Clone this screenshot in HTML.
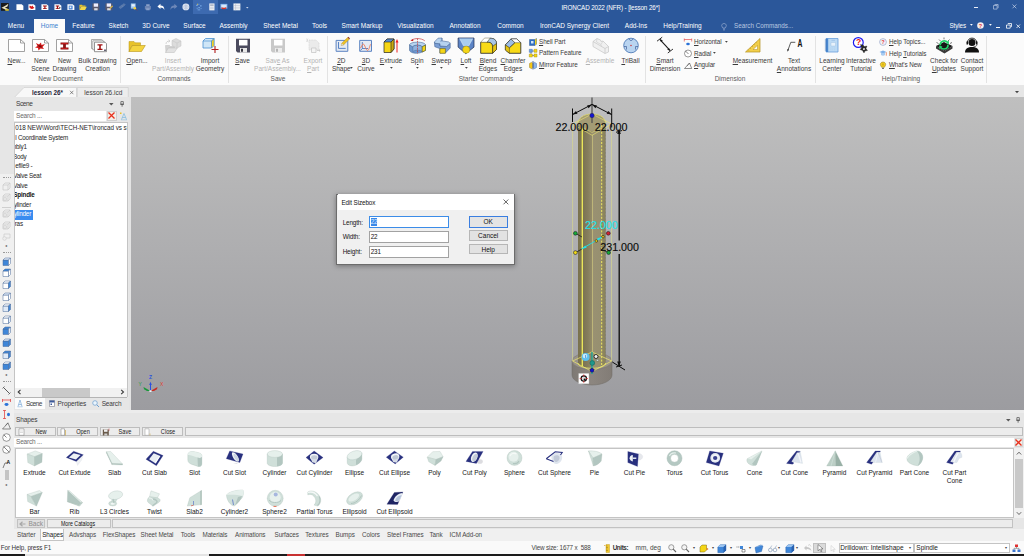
<!DOCTYPE html><html><head><meta charset="utf-8"><title>IRONCAD 2022 (NFR) - [lesson 26*]</title><style>
html,body{margin:0;padding:0}
body{width:1024px;height:556px;overflow:hidden;position:relative;background:#e4e4e4;font-family:"Liberation Sans",sans-serif;font-size:6.5px;color:#3a3a3a}
.a{position:absolute}
.t{position:absolute;white-space:nowrap;line-height:8px;height:8px}
.c{transform:translateX(-50%);text-align:center}
.w{color:#fff}
.d{color:#b4b4b4}
.g{color:#5a5a5a}
u{text-decoration:underline;text-decoration-thickness:0.5px;text-underline-offset:0.6px}
svg{position:absolute;overflow:visible}
</style></head><body>
<div class="a" style="left:0px;top:0px;width:1024px;height:33px;background:#2b579a;"></div>
<div class="t c w" style="left:610.5px;top:3.5px;font-size:6.3px;letter-spacing:-0.12px">IRONCAD 2022 (NFR) - [lesson 26*]</div>
<div class="a" style="left:193px;top:0px;width:25px;height:14px;background:#3d6ab0;"></div>
<svg style="left:1.1px;top:3.2px" width="7.8" height="7.8" viewBox="0 0 9 9"><path d="M0 0h9v9h-9z" fill="#1a1a1a"/><path d="M0.500 5.500l4-2 4-2.500-1 3-3 1.500 3.500 1-2 1.500-3-1.500z" fill="#e8e0c0"/><path d="M5 7h4v2h-4z" fill="#d8c840"/></svg>
<svg style="left:15.6px;top:3.2px" width="7.8" height="7.8" viewBox="0 0 9 9"><path d="M0.500 1.500h6l2 1.800v4.700h-8z" fill="#fff"/></svg>
<svg style="left:28.1px;top:3.2px" width="7.8" height="7.8" viewBox="0 0 9 9"><path d="M0.500 1.500h6l2 1.800v4.700h-8z" fill="#fff"/><path d="M2 3l2 1 1.500-1 0.500 1.500 1.500 0-1.500 1.500 0.500 1-2-0.500-1.500 0.800 0-1.500-1.500-0.500z" fill="#d81818"/></svg>
<svg style="left:41.1px;top:3.2px" width="7.8" height="7.8" viewBox="0 0 9 9"><path d="M0.500 1.500h6l2 1.800v4.700h-8z" fill="#fff"/><path d="M2.300 3h4.400v1h-1.500v2h1.500v1h-4.400v-1h1.500v-2h-1.500z" fill="#a01010"/></svg>
<svg style="left:54.1px;top:3.2px" width="7.8" height="7.8" viewBox="0 0 9 9"><path d="M0.500 1.500h6l2 1.800v4.700h-8z" fill="#fff"/><path d="M2 3h4v1h-1.300v2h1.300v1h-4v-1h1.300v-2h-1.300z" fill="#a01010"/><path d="M6 4.500l2 1-2 1.500z" fill="#333"/></svg>
<svg style="left:66.6px;top:3.2px" width="7.8" height="7.8" viewBox="0 0 9 9"><path d="M0.500 1.500h6l2 1.800v4.700h-8z" fill="#fff"/><path d="M2 3h4.500v4.500h-4.500z" fill="#4a86d8"/><path d="M3 4h2v2h-2z" fill="#e8f0fa"/></svg>
<svg style="left:79.1px;top:3.2px" width="7.8" height="7.8" viewBox="0 0 9 9"><path d="M0.500 2h3l0.600 0.800h3.400v1.500h-5.500l-1.500 3.700z" fill="#e8c22a"/><path d="M2.500 4.300h6.500l-2 3.700h-6.500z" fill="#f4d84a"/></svg>
<svg style="left:92.1px;top:3.2px" width="7.8" height="7.8" viewBox="0 0 9 9"><path d="M0.500 0.500h8v8h-7l-1-1z" fill="#5a5a6e"/><path d="M2 0.500h5v3.800h-5z" fill="#eef"/><path d="M2.500 6h4v2.500h-4z" fill="#dcdce4"/></svg>
<svg style="left:105.1px;top:3.2px" width="7.8" height="7.8" viewBox="0 0 9 9"><path d="M0.500 0.500h8v8h-7l-1-1z" fill="#5a5a6e"/><path d="M2 0.500h5v3.800h-5z" fill="#eef"/><path d="M2.500 6h4v2.500h-4z" fill="#dcdce4"/><path d="M5 6l3.500-3 0.800 0.800-3.500 3z" fill="#e8c040"/></svg>
<svg style="left:118.1px;top:3.2px" width="7.8" height="7.8" viewBox="0 0 9 9"><path d="M1 5l3-2.500 2 1.500-3 2.500zM4 3l3-2.500 1.500 1.500-3 2.500z" fill="#5877a8" stroke="#6e8cbc" stroke-width="0.400"/></svg>
<svg style="left:130.1px;top:3.2px" width="7.8" height="7.8" viewBox="0 0 9 9"><path d="M1 0.500h5.500v6h-5.500z" fill="#9fc6ee"/><path d="M2 1.500h3.500v2.500h-3.500z" fill="#e8f2fc"/><circle cx="5.500" cy="6" r="1.500" fill="#f0d040"/><path d="M6.500 7l1.500 1.500" stroke="#c03020" stroke-width="0.700"/></svg>
<svg style="left:144.1px;top:3.2px" width="7.8" height="7.8" viewBox="0 0 9 9"><path d="M1 3.500h7v4h-7z" fill="#6e86b4"/><path d="M2.500 1.500h4v2h-4zM2.500 6h4v2.500h-4z" fill="#8aa0c8"/></svg>
<svg style="left:156.6px;top:3.2px" width="7.8" height="7.8" viewBox="0 0 9 9"><path d="M0.500 4l3.500-3v2c3 0 4.500 1.500 4.500 5-1-2-2.500-2.800-4.500-2.800v1.800z" fill="#fff"/></svg>
<svg style="left:169.6px;top:3.2px" width="7.8" height="7.8" viewBox="0 0 9 9"><path d="M8.500 4l-3.500-3v2c-3 0-4.500 1.500-4.500 5 1-2 2.500-2.800 4.500-2.800v1.800z" fill="#6e88b8"/></svg>
<svg style="left:182.1px;top:3.2px" width="7.8" height="7.8" viewBox="0 0 9 9"><circle cx="4.500" cy="4.500" r="4" fill="#dfe6f2"/><path d="M4.500 0.500v8M0.500 4.500h8" stroke="#9fb0cc" stroke-width="0.500"/><path d="M2 2c1.500 1.500 3.500 1.500 5 0M2 7c1.500-1.500 3.500-1.500 5 0" fill="none" stroke="#9fb0cc" stroke-width="0.500"/></svg>
<svg style="left:195.1px;top:3.2px" width="7.8" height="7.8" viewBox="0 0 9 9"><path d="M1.500 2h1.500v1.500h-1.500zM4 1h1v1h-1zM6 2.500h1.500v1.500h-1.500zM2 5.500h1v1h-1zM4 4.500h1.500v1.500h-1.500zM6.500 6h1v1h-1zM3 7.500h3v1h-3z" fill="#7fb2ee"/><path d="M2.500 1h1v1h-1z" fill="#f0d040"/></svg>
<svg style="left:207.6px;top:3.2px" width="7.8" height="7.8" viewBox="0 0 9 9"><path d="M1.500 0.500h6v8h-6z" fill="#eef0f4"/><path d="M2.500 1.500h4v2h-4z" fill="#b0b8c8"/><path d="M2.500 5h4M2.500 6.500h4" stroke="#b0b8c8" stroke-width="0.600"/></svg>
<svg style="left:220.1px;top:3.2px" width="7.8" height="7.8" viewBox="0 0 9 9"><path d="M0.500 1h8v5.500h-8z" fill="#7fb2ee"/><path d="M1.500 2h6v3.500h-6z" fill="#d8e8fa"/><path d="M2 4.500c1.500 1.500 3.500 1.500 5 0l0.500 1.500c-2 1.500-4 1.500-6 0z" fill="#e03020"/></svg>
<svg style="left:233.1px;top:3.2px" width="7.8" height="7.8" viewBox="0 0 9 9"><path d="M0.500 0.500h8v8h-8z" fill="#eef0f4"/><path d="M0.500 3h8M0.500 5.700h8M3 0.500v8" stroke="#a8b0c0" stroke-width="0.500"/></svg>
<svg style="left:246.0px;top:6.7px" width="2.6" height="1.6" viewBox="0 0 2.6 1.6"><path d="M0 0h2.6l-1.3 1.6z" fill="#c8d4ea"/></svg>
<div class="a" style="left:974px;top:7px;width:4px;height:1px;background:#e8eef8;"></div>
<svg style="left:993.3px;top:3.5px" width="6" height="6" viewBox="0 0 6 6"><path d="M1.500 0.500h3.600v3.600M0.500 1.500h3.600v3.600h-3.600z" fill="none" stroke="#d0daee" stroke-width="0.600"/></svg>
<svg style="left:1012.2px;top:4px" width="5" height="5" viewBox="0 0 5 5"><path d="M0.500 0.500l3.800 3.800M4.300 0.500l-3.800 3.800" stroke="#e0e8f6" stroke-width="0.600"/></svg>
<svg style="left:969.9px;top:24.15px" width="2.8" height="1.7" viewBox="0 0 2.8 1.7"><path d="M0 0h2.8l-1.4 1.7z" fill="#fff"/></svg>
<svg style="left:976.8px;top:21.8px" width="7" height="7" viewBox="0 0 7 7"><circle cx="3.500" cy="3.500" r="3.300" fill="#f6eeee"/></svg>
<div class="t" style="left:978.700px;top:21.500px;font-size:5.500px;font-weight:bold;color:#e03030;line-height:8px">?</div>
<svg style="left:988.6px;top:24.15px" width="2.8" height="1.7" viewBox="0 0 2.8 1.7"><path d="M0 0h2.8l-1.4 1.7z" fill="#fff"/></svg>
<div class="a" style="left:996px;top:26.5px;width:3.5px;height:1px;background:#fff;"></div>
<svg style="left:1005.5px;top:22.5px" width="6" height="6" viewBox="0 0 6 6"><path d="M1.800 0.500h3.700v3.200h-1M0.500 2h3.700v3.200h-3.700z" fill="none" stroke="#fff" stroke-width="0.800"/></svg>
<svg style="left:1016px;top:23.5px" width="5" height="5" viewBox="0 0 5 5"><path d="M0.500 0.500l3.500 3.500M4 0.500l-3.500 3.500" stroke="#fff" stroke-width="0.800"/></svg>
<svg style="left:720.5px;top:22.5px" width="6" height="8" viewBox="0 0 6 8"><path d="M3 0.500c-1.500 0-2.300 1-2.300 2.200 0 1 0.800 1.500 1 2.300h2.600c0.200-0.800 1-1.300 1-2.300 0-1.200-0.800-2.200-2.300-2.200zM2 6h2M2.200 7h1.600" fill="none" stroke="#b9c7e0" stroke-width="0.500"/></svg>
<div class="a" style="left:34px;top:19px;width:31px;height:14px;background:#fbfbfb;"></div>
<div class="t c w" style="left:16px;top:22.3px;">Menu</div>
<div class="t c w" style="left:83.5px;top:22.3px;">Feature</div>
<div class="t c w" style="left:118.5px;top:22.3px;">Sketch</div>
<div class="t c w" style="left:156px;top:22.3px;">3D Curve</div>
<div class="t c w" style="left:194.5px;top:22.3px;">Surface</div>
<div class="t c w" style="left:233.5px;top:22.3px;">Assembly</div>
<div class="t c w" style="left:280.5px;top:22.3px;">Sheet Metal</div>
<div class="t c w" style="left:319.5px;top:22.3px;">Tools</div>
<div class="t c w" style="left:362px;top:22.3px;">Smart Markup</div>
<div class="t c w" style="left:415.5px;top:22.3px;">Visualization</div>
<div class="t c w" style="left:465px;top:22.3px;">Annotation</div>
<div class="t c w" style="left:510.5px;top:22.3px;">Common</div>
<div class="t c w" style="left:574.5px;top:22.3px;">IronCAD Synergy Client</div>
<div class="t c w" style="left:636px;top:22.3px;">Add-Ins</div>
<div class="t c w" style="left:682.5px;top:22.3px;">Help/Training</div>
<div class="t c " style="left:49.5px;top:22.3px;color:#3c7fd0">Home</div>
<div class="t " style="left:734px;top:22.3px;color:#b9c7e0;font-size:6.3px">Search Commands...</div>
<div class="t w" style="left:949.5px;top:22.3px;font-size:6.3px;letter-spacing:-0.1px">Styles</div>
<div class="a" style="left:0px;top:33px;width:1024px;height:52px;background:#fbfbfb;"></div>
<div class="a" style="left:120.3px;top:35.5px;width:1px;height:47.5px;background:#e3e3e3;"></div>
<div class="a" style="left:227.8px;top:35.5px;width:1px;height:47.5px;background:#e3e3e3;"></div>
<div class="a" style="left:326.8px;top:35.5px;width:1px;height:47.5px;background:#e3e3e3;"></div>
<div class="a" style="left:645px;top:35.5px;width:1px;height:47.5px;background:#e3e3e3;"></div>
<div class="a" style="left:815px;top:35.5px;width:1px;height:47.5px;background:#e3e3e3;"></div>
<div class="a" style="left:986px;top:35.5px;width:1px;height:47.5px;background:#e3e3e3;"></div>
<svg style="left:7.5px;top:37px" width="18" height="16" viewBox="0 0 18 16"><path d="M0.5 2.5h12l4 3.5v8.5h-16z" fill="#fff" stroke="#8a8a8a" stroke-width="0.8"/><path d="M12.5 2.5v3.5h4" fill="none" stroke="#8a8a8a" stroke-width="0.8"/></svg>
<div class="t c " style="left:16.5px;top:56.7px;"><u>N</u>ew...</div>
<svg style="left:31.5px;top:37px" width="18" height="16" viewBox="0 0 18 16"><path d="M0.5 2.5h12l4 3.5v8.5h-16z" fill="#fff" stroke="#8a8a8a" stroke-width="0.8"/><path d="M12.5 2.5v3.5h4" fill="none" stroke="#8a8a8a" stroke-width="0.8"/><path d="M4 6l3 1.5 2-2 0.5 2.5 3.5-1-2.5 3 1.5 2-3.5-0.5-2 2-0.5-2.5-3-0.5 2.5-1.5z" fill="#d01818"/><path d="M6 8l3 0.5 1 2-3-0.5z" fill="#7a0c0c"/></svg>
<div class="t c " style="left:40.5px;top:56.7px;">New</div>
<div class="t c " style="left:40.5px;top:64.8px;">Scene</div>
<svg style="left:55.5px;top:37px" width="18" height="16" viewBox="0 0 18 16"><path d="M0.5 2.5h12l4 3.5v8.5h-16z" fill="#fff" stroke="#8a8a8a" stroke-width="0.8"/><path d="M12.5 2.5v3.5h4" fill="none" stroke="#8a8a8a" stroke-width="0.8"/><path d="M4.5 5.5h8v2h-2.6v3h2.6v2h-8v-2h2.6v-3h-2.6z" fill="#8c1414"/><path d="M5.5 6h6v0.8h-6zM5.500 11h6v0.8h-6z" fill="#d42020"/></svg>
<div class="t c " style="left:64.5px;top:56.7px;">New</div>
<div class="t c " style="left:64.5px;top:64.8px;">Drawing</div>
<svg style="left:88.5px;top:37px" width="18" height="16" viewBox="0 0 18 16"><path d="M2.500 2.500h10l2 1.500v7.500h-12z" fill="#fff" stroke="#8a8a8a" stroke-width="0.7"/><path d="M3.800 3.800h10l2 1.500v7.500h-12z" fill="#fff" stroke="#8a8a8a" stroke-width="0.7"/><path d="M5.500 5.200h10.500l1.500 1.500v8h-12z" fill="#fff" stroke="#777" stroke-width="0.8"/><path d="M8.500 7.200h5v1.300h-1.700v3.200h1.700v1.300h-5v-1.300h1.700v-3.200h-1.700z" fill="#a01010"/><path d="M15 12.500h2v1.500h-2z" fill="#667"/></svg>
<div class="t c " style="left:97.5px;top:56.7px;">Bulk Drawing</div>
<div class="t c " style="left:97.5px;top:64.8px;">Creation</div>
<div class="t c g" style="left:60.5px;top:74.5px;">New Document</div>
<svg style="left:128px;top:37px" width="18" height="16" viewBox="0 0 18 16"><path d="M1 4.500h5l1 1.300h5.500v2.700h-8.500l-3 6z" fill="#e8c22a" stroke="#b8961a" stroke-width="0.5"/><path d="M4.300 8.500h13l-3.800 6h-12.500z" fill="#f4d440" stroke="#b8961a" stroke-width="0.6"/></svg>
<div class="t c " style="left:137px;top:56.7px;"><u>O</u>pen...</div>
<svg style="left:164px;top:37px" width="18" height="16" viewBox="0 0 18 16"><path d="M1.500 8.500h4l1 1h4v1.500h-6l-2.500 4.500z" fill="#d4d4d4" stroke="#bdbdbd" stroke-width="0.5"/><path d="M4.300 11h9l-3 4.500h-8.800z" fill="#e2e2e2" stroke="#bdbdbd" stroke-width="0.5"/><path d="M8 3.500l4-2 5 2.500v5l-4 2-5-2.500z" fill="#dcdcdc" stroke="#c2c2c2" stroke-width="0.5"/><path d="M8 3.500l5 2.500 4-2M13 6v5" fill="none" stroke="#c2c2c2" stroke-width="0.5"/><path d="M2 7c0-2 1.500-3 3.500-3M4.500 2.800l1.500 1.200-1.500 1.200" fill="none" stroke="#c4c4c4" stroke-width="0.7"/></svg>
<div class="t c d" style="left:173px;top:56.7px;">Insert</div>
<div class="t c d" style="left:173px;top:64.8px;">Part/Assembly</div>
<svg style="left:201px;top:37px" width="18" height="16" viewBox="0 0 18 16"><path d="M2 4l2.500-2.500h8.500v7l-2.500 2.500h-8.500z" fill="#cfe6f7" stroke="#4a8fd0" stroke-width="0.8"/><path d="M10.500 4l2.500-2.500v7l-2.500 2.500z" fill="#f2d024" stroke="#4a8fd0" stroke-width="0.5"/><path d="M2 4h8.500v7M10.500 4l2.500-2.500" fill="none" stroke="#4a8fd0" stroke-width="0.7"/><path d="M14 9v7M10.500 12.500h7" stroke="#b01c1c" stroke-width="1.100"/></svg>
<div class="t c " style="left:210px;top:56.7px;">Import</div>
<div class="t c " style="left:210px;top:64.8px;">Geometry</div>
<div class="t c g" style="left:174px;top:74.5px;">Commands</div>
<svg style="left:233.5px;top:37px" width="18" height="16" viewBox="0 0 18 16"><path d="M2 1.700h14v13.800h-12.500l-1.500-1.500z" fill="#4b4b5e"/><path d="M5 2.800h8.500v5.700h-8.500z" fill="#fff"/><path d="M6 11h7v4.500h-7z" fill="#e8e8e8"/><path d="M7 11.800h2v3h-2z" fill="#33333f"/></svg>
<div class="t c " style="left:242.5px;top:56.7px;"><u>S</u>ave</div>
<svg style="left:268.5px;top:37px" width="18" height="16" viewBox="0 0 18 16"><path d="M2 1.700h14v13.800h-12.500l-1.500-1.500z" fill="#c9c9c9"/><path d="M5 2.800h8.500v5.700h-8.500z" fill="#fff"/><path d="M6 11h7v4.500h-7z" fill="#ececec"/><path d="M7 11.800h2v3h-2z" fill="#b5b5b5"/></svg>
<div class="t c d" style="left:277.5px;top:56.7px;">Sav<u>e</u> As</div>
<div class="t c d" style="left:277.5px;top:64.8px;">Part/Assembly...</div>
<svg style="left:304px;top:37px" width="18" height="16" viewBox="0 0 18 16"><path d="M5 3h7l3 3v7h-10z" fill="#ebebeb" stroke="#cfcfcf" stroke-width="0.6" stroke-dasharray="1 0.600"/><path d="M2.500 1.500l1.500 3.500M4 1.500l-1.500 3.500" stroke="#c8c8c8" stroke-width="0.5"/><path d="M7.500 11h4.500v4.500h-4.500z" fill="#f4f4f4" stroke="#c2c2c2" stroke-width="0.7"/><path d="M13 13.500h3M15 12.500l1.200 1-1.200 1" fill="none" stroke="#c4c4c4" stroke-width="0.7"/></svg>
<div class="t c d" style="left:313px;top:56.7px;">Export</div>
<div class="t c d" style="left:313px;top:64.8px;"><u>P</u>art</div>
<div class="t c g" style="left:278px;top:74.5px;">Save</div>
<svg style="left:332.3px;top:37px" width="18" height="16" viewBox="0 0 18 16"><path d="M4.100 3.400h11.700v10.900h-11.700z" fill="#e4eaf3" stroke="#5c84c2" stroke-width="1"/><path d="M6.500 5v6.400h7.200" fill="none" stroke="#4a78c0" stroke-width="0.9"/><path d="M9.200 8.500l0.600-2.300 5.800-5.600 1.700 1.700-5.800 5.600z" fill="#eec224" stroke="#a07a18" stroke-width="0.4"/><path d="M15.600 0.600l1.700 1.700 0.700-0.800-1.500-1.700z" fill="#9a3a30"/><path d="M9.200 8.500l0.600-2.300 1.700 1.700z" fill="#d8d8d8"/></svg>
<div class="t c " style="left:341.3px;top:56.7px;"><u>2</u>D</div>
<div class="t c " style="left:341.3px;top:64.8px;">Shape</div>
<svg style="left:350.1px;top:67.15px" width="2.8" height="1.7" viewBox="0 0 2.8 1.7"><path d="M0 0h2.8l-1.4 1.7z" fill="#444"/></svg>
<svg style="left:357px;top:37px" width="18" height="16" viewBox="0 0 18 16"><path d="M2.700 3.400h11.800v10.900h-11.800z" fill="#e4eaf3" stroke="#5c84c2" stroke-width="1"/><path d="M5.300 5v6.500h5.700M5.300 11.500l-1.800 2" fill="none" stroke="#3f6ab4" stroke-width="0.8"/><path d="M3.300 11.200c1-1 2-4.200 2.900-4.200 1.600 0 2.600 6.400 4.400 6.400 1.300 0 2-4 2.900-6.100" fill="none" stroke="#f07a58" stroke-width="0.9"/></svg>
<div class="t c " style="left:366px;top:56.7px;"><u>3</u>D</div>
<div class="t c " style="left:366px;top:64.8px;">Curve</div>
<svg style="left:382px;top:37px" width="18" height="16" viewBox="0 0 18 16"><path d="M2 5l3-3h7v10l-3 3.500h-7z" fill="#f5d616" stroke="#222" stroke-width="0.7"/><path d="M2 5l3-3h7l-3 3z" fill="#5b8fd0" stroke="#222" stroke-width="0.6"/><path d="M9 5l3-3v10l-3 3.500z" fill="#c8a810" stroke="#222" stroke-width="0.6"/><path d="M15 15.500v-11" stroke="#f02020" stroke-width="1"/><path d="M13.500 5.500l1.500-3.500 1.500 3.500z" fill="#f02020"/></svg>
<div class="t c " style="left:391px;top:56.7px;"><u>E</u>xtrude</div>
<svg style="left:389.6px;top:66.95px" width="2.8" height="1.7" viewBox="0 0 2.8 1.7"><path d="M0 0h2.8l-1.4 1.7z" fill="#444"/></svg>
<svg style="left:408px;top:37px" width="18" height="16" viewBox="0 0 18 16"><path d="M1.500 8v5c0 1.800 3 3.300 7 3.300 2.200 0 4.200-0.500 5.700-1.200l3.300-1.700v-5z" fill="#6f98d0" stroke="#3a5a8a" stroke-width="0.5"/><path d="M1.500 8c0-1.600 3.600-2.900 8-2.900s8 1.300 8 2.900l-3.300 1.800c-0.600-1-2.400-1.600-4.700-1.600s-4 0.600-4.700 1.600z" fill="#b8d4f0" stroke="#3a5a8a" stroke-width="0.5"/><path d="M4.800 9.800c0.700-1 2.400-1.600 4.700-1.600s4.100 0.600 4.700 1.600v5c-0.600-1-2.400-1.600-4.700-1.600s-4 0.600-4.700 1.600z" fill="#8fb2de" stroke="#3a5a8a" stroke-width="0.4"/><path d="M14.200 9.800l3.300-1.800v5.400l-3.300 1.700z" fill="#f5d616" stroke="#4a4a1a" stroke-width="0.5"/><path d="M9.500 1.500v15" stroke="#c03030" stroke-width="0.7" stroke-dasharray="1.6 0.8"/><path d="M3.500 3.300c3-2.400 9.500-2.400 13.300 0.500" fill="none" stroke="#c84040" stroke-width="0.7"/><path d="M2.300 3.500l2.800-1.500 0.200 2.300z" fill="#c82020"/></svg>
<div class="t c " style="left:417px;top:56.7px;">S<u>p</u>in</div>
<svg style="left:415.6px;top:66.95px" width="2.8" height="1.7" viewBox="0 0 2.8 1.7"><path d="M0 0h2.8l-1.4 1.7z" fill="#444"/></svg>
<svg style="left:432.5px;top:37px" width="18" height="16" viewBox="0 0 18 16"><path d="M1.400 5L2 6.300L7 6.800L7 9L13.500 9.500L17.200 6.300L17.200 11L12.400 16L6.900 16L6.900 11.600L1.800 9.700z" fill="#7a9ed4" stroke="#44669a" stroke-width="0.6"/><path d="M5 1.200L9 1L9 3.900L15.500 4.900L17.200 6.300L13.500 9.500L7 9L7 6.800L2 6.300L1.400 5z" fill="#b6d2ef" stroke="#44669a" stroke-width="0.6"/><path d="M9 1v2.900l-1.800 0.300" fill="none" stroke="#44669a" stroke-width="0.5"/><path d="M6.900 11.600h5.500v4.700h-5.500z" fill="#f5d616" stroke="#5a4e10" stroke-width="0.5"/></svg>
<div class="t c " style="left:441.5px;top:56.7px;"><u>S</u>weep</div>
<svg style="left:440.1px;top:66.95px" width="2.8" height="1.7" viewBox="0 0 2.8 1.7"><path d="M0 0h2.8l-1.4 1.7z" fill="#444"/></svg>
<svg style="left:457px;top:37px" width="18" height="16" viewBox="0 0 18 16"><path d="M1.100 1h15.900v9.100l-8.200 6.600-7.700-6.600z" fill="#5c84c6" stroke="#1e2c50" stroke-width="0.7"/><path d="M2.600 1.500h13.200l-4.100 7.500h-5.100z" fill="#a9cdee"/><path d="M2.600 1.500l4 7.500M15.800 1.500l-4.100 7.500" stroke="#e8f2fb" stroke-width="0.5"/><circle cx="9.200" cy="12.700" r="3.600" fill="#f5d616" stroke="#8a7a10" stroke-width="0.4"/></svg>
<div class="t c " style="left:466px;top:56.7px;"><u>L</u>oft</div>
<svg style="left:464.6px;top:66.95px" width="2.8" height="1.7" viewBox="0 0 2.8 1.7"><path d="M0 0h2.8l-1.4 1.7z" fill="#444"/></svg>
<svg style="left:479px;top:37px" width="18" height="16" viewBox="0 0 18 16"><path d="M1.700 5.300L5.500 1.300H12C15.500 1.300 17.500 3.500 17.500 6.500V12.500L13.600 16.300H1.700z" fill="#f8da18" stroke="#222" stroke-width="0.8"/><path d="M1.700 5.300L5.500 1.300H11L8 5.300z" fill="#fff"/><path d="M11 1.300H12C15.500 1.300 17.500 3.500 17.500 6.500L13.600 9.500C13.600 7 12 5.300 9.500 5.300H8z" fill="#a9c6e6" stroke="#222" stroke-width="0.4"/><path d="M13.600 9.500L17.500 6.500V12.500L13.600 16.300z" fill="#e6c410" stroke="#222" stroke-width="0.4"/><path d="M1.700 5.300H9.500C12 5.300 13.600 7 13.600 9.500V16.300" fill="none" stroke="#222" stroke-width="0.5"/></svg>
<div class="t c " style="left:488px;top:56.7px;"><u>B</u>lend</div>
<div class="t c " style="left:488px;top:64.8px;">Edges</div>
<svg style="left:504px;top:37px" width="18" height="16" viewBox="0 0 18 16"><path d="M1.400 7.900L6.900 2H12.800L16.800 5.700V16.300H5.400L1.400 13z" fill="#f8da18" stroke="#222" stroke-width="0.8"/><path d="M6.900 2H12.800L16.800 5.700H10.900z" fill="#fff" stroke="#222" stroke-width="0.4"/><path d="M1.400 7.900L6.900 2L10.900 5.700L5.400 10.800z" fill="#9dbce4" stroke="#222" stroke-width="0.4"/><path d="M1.400 7.900L5.400 10.800V16.300L1.400 13z" fill="#e6c410" stroke="#222" stroke-width="0.4"/><path d="M5.400 10.800L10.900 5.700" stroke="#222" stroke-width="0.5"/></svg>
<div class="t c " style="left:513px;top:56.7px;"><u>C</u>hamfer</div>
<div class="t c " style="left:513px;top:64.8px;">Edges</div>
<svg style="left:529px;top:37.7px" width="8" height="8" viewBox="0 0 8 8"><path d="M0.500 1.500h5.500l1.500-1v5.500l-1.500 1.500h-5.500z" fill="#2f6ec0" stroke="#1d4a8a" stroke-width="0.400"/><path d="M6 1.500l1.500-1v5.500l-1.500 1.500z" fill="#f0d020"/><path d="M2 3h2.500v2.500h-2.500z" fill="#cfe2f6"/></svg>
<div class="t " style="left:539px;top:37.8px;font-size:6.3px;letter-spacing:-0.09px"><u>S</u>hell Part</div>
<svg style="left:529px;top:49.3px" width="8" height="8" viewBox="0 0 8 8"><path d="M2 2v4.500h4.500M2 2h4.500" fill="none" stroke="#3a3a3a" stroke-width="0.500"/><path d="M0.300 0.300h3v3h-3z" fill="#6d9fe0" stroke="#2a5aa0" stroke-width="0.400"/><path d="M5 0.300h3v3h-3zM0.300 5h3v3h-3zM5 5h3v3h-3z" fill="#f5d616" stroke="#9a8410" stroke-width="0.400"/></svg>
<div class="t " style="left:539px;top:48.8px;font-size:6.3px;letter-spacing:-0.09px">Pattern Feature</div>
<svg style="left:529px;top:61.2px" width="8" height="8" viewBox="0 0 8 8"><path d="M0.500 2.500c2-1.500 3-1.500 3 0v4c0 1.500-1 1.500-3 0z" fill="#f5c816" stroke="#8a6c10" stroke-width="0.400"/><path d="M7.500 2.500c-2-1.500-3-1.500-3 0v4c0 1.500 1 1.500 3 0z" fill="#8db4e8" stroke="#2a5aa0" stroke-width="0.400"/><path d="M4 0v8.500" stroke="#2a4a90" stroke-width="0.800"/></svg>
<div class="t " style="left:539px;top:60.8px;font-size:6.3px;letter-spacing:-0.09px"><u>M</u>irror Feature</div>
<svg style="left:591px;top:37px" width="18" height="16" viewBox="0 0 18 16"><path d="M2 4.500l4-3 3.500 1.500 0.500 1.500 2-0.500 5.500 5.500v5.500l-3.500 1.500-12-7z" fill="#f0f0f0" stroke="#c6c6c6" stroke-width="0.7"/><path d="M2 4.500l12 7 3.500-2M14 11.500v5" fill="none" stroke="#c6c6c6" stroke-width="0.7"/><path d="M6 1.500l-0.500 3.500 4.500 2.500 2-3.500M10 7.500l0.500 2" fill="none" stroke="#cdcdcd" stroke-width="0.6"/></svg>
<div class="t c d" style="left:600px;top:56.7px;"><u>A</u>ssemble</div>
<svg style="left:621.5px;top:37px" width="18" height="16" viewBox="0 0 18 16"><circle cx="9" cy="8.500" r="7.300" fill="#b9d4f0" stroke="#3f6fb0" stroke-width="0.8"/><path d="M6.500 1.800l2.500 2 2.500-2M2 9.500h2.500v3M16 9.500h-2.500v3" fill="none" stroke="#3f5f9a" stroke-width="0.7"/><circle cx="9" cy="8.500" r="0.700" fill="#d02020"/></svg>
<div class="t c " style="left:630.5px;top:56.7px;"><u>T</u>riBall</div>
<div class="t c g" style="left:486px;top:74.5px;">Starter Commands</div>
<svg style="left:656px;top:37px" width="18" height="16" viewBox="0 0 18 16"><path d="M3.800 2.300l10.400 11.400" stroke="#1a1a1a" stroke-width="1.100"/><path d="M1 4.200l5.200-4M11.800 16l5.200-4" stroke="#1a1a1a" stroke-width="0.900"/><path d="M3.800 2.300l3 1-1.800 1.700zM14.200 13.700l-3-1 1.800-1.700z" fill="#1a1a1a"/></svg>
<div class="t c " style="left:665px;top:56.7px;"><u>S</u>mart</div>
<div class="t c " style="left:665px;top:64.8px;">Dimension</div>
<svg style="left:684px;top:37.7px" width="8" height="8" viewBox="0 0 8 8"><path d="M0.300 0.500v3M7.700 0.500v3M0.300 1.500h7.400" stroke="#e03030" stroke-width="0.600" fill="none"/><ellipse cx="4" cy="6" rx="1.800" ry="1.300" fill="#2a72d8"/></svg>
<div class="t " style="left:694px;top:37.8px;font-size:6.3px;letter-spacing:-0.09px"><u>H</u>orizontal</div>
<svg style="left:725.1px;top:40.75px" width="2.8" height="1.7" viewBox="0 0 2.8 1.7"><path d="M0 0h2.8l-1.4 1.7z" fill="#444"/></svg>
<svg style="left:684px;top:49.3px" width="8" height="8" viewBox="0 0 8 8"><circle cx="4" cy="4.500" r="3.500" fill="#fff" stroke="#555" stroke-width="0.600"/><path d="M1.500 2l3 3" stroke="#333" stroke-width="0.600"/></svg>
<div class="t " style="left:694px;top:49.9px;font-size:6.3px;letter-spacing:-0.09px"><u>R</u>adial</div>
<svg style="left:712.6px;top:52.449999999999996px" width="2.8" height="1.7" viewBox="0 0 2.8 1.7"><path d="M0 0h2.8l-1.4 1.7z" fill="#444"/></svg>
<svg style="left:684px;top:61.2px" width="8" height="8" viewBox="0 0 8 8"><path d="M0.500 7.500h7.200l-2.200-5.500z" fill="none" stroke="#444" stroke-width="0.600"/><path d="M3 5l2.500-3" stroke="#444" stroke-width="0.500"/></svg>
<div class="t " style="left:694px;top:60.8px;font-size:6.3px;letter-spacing:-0.09px"><u>A</u>ngular</div>
<svg style="left:743.5px;top:37px" width="18" height="16" viewBox="0 0 18 16"><path d="M1.500 15l14.500-13.500v13.500z" fill="#f3cf4a" stroke="#b38f1c" stroke-width="0.7"/><path d="M9 12.500l4.500-4.200v4.200z" fill="#f8f8f8" stroke="#b38f1c" stroke-width="0.5"/><path d="M4 12.700l0.800 0.900M6 10.900l0.800 0.900M8 9l0.800 0.900M10 7.200l0.800 0.900M12 5.300l0.800 0.900" stroke="#8a6c10" stroke-width="0.400"/></svg>
<div class="t c " style="left:752.5px;top:56.7px;"><u>M</u>easurement</div>
<svg style="left:785px;top:37px" width="18" height="16" viewBox="0 0 18 16"><path d="M2.900 13.300l2.900-8h4.500" fill="none" stroke="#1a1a1a" stroke-width="0.700"/><path d="M2.300 14.700l0.200-2.600 1.600 0.700z" fill="#1a1a1a"/></svg>
<div class="t c " style="left:794px;top:56.7px;">Text</div>
<div class="t c " style="left:794px;top:64.8px;"><u>A</u>nnotations</div>
<div class="t" style="left:795.500px;top:36.500px;font-size:11px;font-weight:bold;color:#111;line-height:12px;height:12px;transform:scaleX(0.62)">A</div>
<div class="t c g" style="left:730px;top:74.5px;">Dimension</div>
<svg style="left:823px;top:37px" width="18" height="16" viewBox="0 0 18 16"><path d="M3 1.500h12v13.500h-12z" fill="#bcdaf4" stroke="#6aa0dc" stroke-width="0.8"/><path d="M3 1.500h2.200v13.500h-2.200z" fill="#4a88d0"/><path d="M8 5.500h4.500v3.500h-4.500z" fill="#e8f2fb" stroke="#9abce0" stroke-width="0.4"/><path d="M8.500 3.300h3.500" stroke="#8ab0dc" stroke-width="0.5"/><path d="M1.800 3h2.200M1.800 5h2.200M1.800 7h2.200M1.800 9h2.200M1.800 11h2.200M1.800 13h2.200" stroke="#3a70b4" stroke-width="0.6"/><path d="M7.500 11h5.500M7.500 12.700h5.500" stroke="#a4c4e6" stroke-width="0.4" stroke-dasharray="0.8 1"/></svg>
<div class="t c " style="left:832px;top:56.7px;">Learning</div>
<div class="t c " style="left:832px;top:64.8px;">Center</div>
<svg style="left:852px;top:37px" width="18" height="16" viewBox="0 0 18 16"><circle cx="6.300" cy="5.500" r="4.900" fill="#fff" stroke="#1a1af0" stroke-width="1.200"/><path d="M8.500 7.500l2.500 0.500 1.500 1.500 2.500-0.500-1 2.500 1.500 2-2.500 0.500-1 2-1.500-2.500-2.500-1 1.500-1.500z" fill="#2a2a2a" stroke="#111" stroke-width="0.300"/><path d="M11.500 11l1.500 0.500-0.500 1.500-1.500-0.300z" fill="#fff"/></svg>
<div class="t c " style="left:861px;top:56.7px;">Interactive</div>
<div class="t c " style="left:861px;top:64.8px;">Tutorial</div>
<div class="t" style="left:856px;top:38px;font-size:8.500px;font-weight:bold;color:#f01010;line-height:9px;height:9px">?</div>
<svg style="left:879px;top:37.7px" width="8" height="8" viewBox="0 0 8 8"><circle cx="4" cy="4" r="3.400" fill="#f2f2f8" stroke="#9aa8c8" stroke-width="0.700"/></svg>
<div class="t " style="left:889px;top:37.8px;font-size:6.3px;letter-spacing:-0.09px"><u>H</u>elp Topics...</div>
<div class="t" style="left:881.6px;top:38.500px;font-size:5px;font-weight:bold;color:#e03030;line-height:6px">?</div>
<svg style="left:879px;top:49.3px" width="8" height="8" viewBox="0 0 8 8"><path d="M0.500 3l3.500-1.500 3.500 1.500-3.500 1.500z" fill="#7fb0e8"/><path d="M2 4v2c1 1 3 1 4 0v-2" fill="#a8cbf0"/><path d="M7.300 3.200v3.500" stroke="#e05020" stroke-width="0.600"/></svg>
<div class="t " style="left:889px;top:49.9px;font-size:6.3px;letter-spacing:-0.09px">Help <u>T</u>utorials</div>
<svg style="left:879px;top:61.2px" width="8" height="8" viewBox="0 0 8 8"><path d="M4 1c-1.700 0-2.700 1.200-2.700 2.600 0 1.100 0.900 1.600 1.300 2.700h2.800c0.400-1.100 1.300-1.600 1.300-2.700 0-1.400-1-2.600-2.700-2.600z" fill="#f2cc20" stroke="#8a7420" stroke-width="0.5"/><path d="M3 6.800h2v1.200h-2z" fill="#777"/><path d="M4 2.500v2" stroke="#8a6c10" stroke-width="0.5"/></svg>
<div class="t " style="left:889px;top:60.8px;font-size:6.3px;letter-spacing:-0.09px"><u>W</u>hat's New</div>
<svg style="left:935px;top:37px" width="18" height="16" viewBox="0 0 18 16"><path d="M1 9L9.500 14L17.500 9V11.500L9.500 16.500L1 11.500z" fill="#3a3a3a"/><path d="M1 9L9 5L17.500 9L9.500 14z" fill="#161616"/><path d="M9 0.500v1.800M4 2.500l1.500 1.500M14.500 2.500l-1.500 1.500M1.500 5.500l2 1M17 5.500l-2 1" stroke="#222" stroke-width="0.6"/><path d="M5.300 8.300c-0.500-2.500 1.500-4.500 4-4.500 1.500 0 2.500 0.600 3.200 1.500" fill="none" stroke="#22d36a" stroke-width="1.700"/><path d="M13.800 3.500l0.200 3.500-3.300-0.700z" fill="#22d36a"/><path d="M12.900 7.700c0.500 2.500-1.500 4.300-4 4.300-1.500 0-2.500-0.600-3.200-1.500" fill="none" stroke="#22d36a" stroke-width="1.700"/><path d="M4.400 12.300l-0.200-3.500 3.300 0.700z" fill="#22d36a"/></svg>
<div class="t c " style="left:944px;top:56.7px;">Check for</div>
<div class="t c " style="left:944px;top:64.8px;"><u>U</u>pdates</div>
<svg style="left:963px;top:37px" width="18" height="16" viewBox="0 0 18 16"><circle cx="9" cy="5.500" r="3.500" fill="#111"/><path d="M2 15.500c0-4 3-5.500 7-5.500s7 1.500 7 5.500z" fill="#111"/><path d="M4.300 6c0-6.500 9.400-6.500 9.400 0" fill="none" stroke="#111" stroke-width="0.900"/><path d="M3.500 4.500h1.500v3h-1.500zM13 4.500h1.500v3h-1.500z" fill="#111"/><path d="M14 7.500c0 1.500-1.500 2.200-3.500 2.200" fill="none" stroke="#111" stroke-width="0.600"/></svg>
<div class="t c " style="left:972px;top:56.7px;">Contact</div>
<div class="t c " style="left:972px;top:64.8px;">Support</div>
<div class="t c g" style="left:901px;top:74.5px;">Help/Training</div>
<div class="a" style="left:0px;top:85px;width:1024px;height:12px;background:#e6e6e6;"></div>
<svg style="left:14px;top:87px" width="116" height="11" viewBox="0 0 116 11"><path d="M0.300 10.500l9.700-10h52.500v10.500h-62.200z" fill="#f8f8f8" stroke="#c4c4c4" stroke-width="0.500"/><path d="M63.300 0.500h51v10h-51z" fill="#ededed" stroke="#c4c4c4" stroke-width="0.500"/><path d="M56 3.800l3.400 3.400M59.400 3.800l-3.400 3.400" stroke="#444" stroke-width="0.600"/></svg>
<div class="t c " style="left:47.5px;top:88.6px;font-weight:bold;font-size:6.3px;color:#1e1e3a">lesson 26*</div>
<div class="t c " style="left:103.3px;top:88.6px;color:#3a3a3a">lesson 26.icd</div>
<svg style="left:1014.5px;top:91.35px" width="4" height="2.3" viewBox="0 0 4 2.3"><path d="M0 0h4l-2.0 2.3z" fill="#444"/></svg>
<div class="a" style="left:131px;top:97px;width:893px;height:313px;background:linear-gradient(#bfbfbf,#9c9ca0);"></div>
<div class="a" style="left:0px;top:97px;width:14px;height:77px;background:#e6e6e6;"></div>
<div class="a" style="left:0px;top:173.5px;width:14px;height:367.5px;background:#f0f0f0;"></div>
<div class="a" style="left:13.5px;top:173.5px;width:0.5px;height:355.5px;background:#d8d8d8;"></div>
<div class="a" style="left:14px;top:97px;width:115px;height:313px;background:#e6e6e6;"></div>
<div class="t " style="left:16px;top:100.2px;letter-spacing:-0.4px">Scene</div>
<svg style="left:109.4px;top:103.3px" width="4.6" height="2.6" viewBox="0 0 4.6 2.6"><path d="M0 0h4.6l-2.3 2.6z" fill="#585858"/></svg>
<svg style="left:120px;top:101px" width="4" height="6" viewBox="0 0 4 6"><path d="M0.900 0.600h2.400v2.600h-2.400z" fill="#f6f6f6" stroke="#444" stroke-width="0.700"/><path d="M0.200 3.300h3.800M2.100 3.300v2.400" fill="none" stroke="#444" stroke-width="0.700"/></svg>
<div class="a" style="left:14px;top:111px;width:92px;height:9.5px;background:#fff;"></div>
<div class="t " style="left:16px;top:112px;color:#6a6a6a;letter-spacing:-0.2px">Search ...</div>
<div class="a" style="left:106.5px;top:111px;width:10px;height:9.5px;background:#f2eee8;border:0.5px solid #cfcfcf;box-sizing:border-box"></div>
<svg style="left:108px;top:112.3px" width="7" height="7" viewBox="0 0 7 7"><path d="M0.500 0.500l6 6M6.500 0.500l-6 6" stroke="#e8301c" stroke-width="1.300"/></svg>
<svg style="left:118.5px;top:112px" width="9" height="8" viewBox="0 0 9 8"><path d="M1 0.500h1.500v1.500h-1.500z" fill="#e8c020"/><path d="M2.500 7.500l2.500-6 2.500 6M3.400 5.500h3.200" fill="none" stroke="#78b8e0" stroke-width="0.700"/><path d="M2 7.800h6" stroke="#78b8e0" stroke-width="0.500"/></svg>
<div class="a" style="left:14px;top:122px;width:113.500px;height:275.300px;background:#fff;border:0.5px solid #c4c4c4;box-sizing:border-box;overflow:hidden">
<div class="a" style="left:0;top:87.300px;width:17.700px;height:9.400px;background:#3a8cf0"></div>
<div class="t" style="left:0.2px;top:1.0px;color:#1e1e1e;font-size:6.3px;letter-spacing:-0.2px;letter-spacing:-0.03px">018 NEW\Word\TECH-NET\ironcad vs s&lt;old</div>
<div class="t" style="left:0.2px;top:10.599999999999994px;color:#1e1e1e;font-size:6.3px;letter-spacing:-0.2px;">l Coordinate System</div>
<div class="t" style="left:-4.1px;top:20.19999999999999px;color:#1e1e1e;font-size:6.3px;letter-spacing:-0.2px;">mbly1</div>
<div class="t" style="left:-2.0px;top:29.80000000000001px;color:#1e1e1e;font-size:6.3px;letter-spacing:-0.2px;">Body</div>
<div class="t" style="left:0.2px;top:39.400000000000006px;color:#1e1e1e;font-size:6.3px;letter-spacing:-0.2px;">efile9 -</div>
<div class="t" style="left:-1.7999999999999998px;top:49.0px;color:#1e1e1e;font-size:6.3px;letter-spacing:-0.2px;">Valve Seat</div>
<div class="t" style="left:-1.7999999999999998px;top:58.599999999999994px;color:#1e1e1e;font-size:6.3px;letter-spacing:-0.2px;">Valve</div>
<div class="t" style="left:-1.7000000000000002px;top:68.19999999999999px;color:#1e1e1e;font-size:6.3px;letter-spacing:-0.2px;font-weight:bold;color:#111">Spindle</div>
<div class="t" style="left:-1.1px;top:77.80000000000001px;color:#1e1e1e;font-size:6.3px;letter-spacing:-0.2px;">ylinder</div>
<div class="t" style="left:-1.1px;top:87.39999999999998px;color:#1e1e1e;font-size:6.3px;letter-spacing:-0.2px;color:#fff">ylinder</div>
<div class="t" style="left:-0.30000000000000004px;top:97.0px;color:#1e1e1e;font-size:6.3px;letter-spacing:-0.2px;">ras</div>
</div>
<div class="a" style="left:14.8px;top:388px;width:112px;height:9px;background:#f1f1f1;"></div>
<div class="a" style="left:41.7px;top:388px;width:48px;height:8.6px;background:#c9c9c9;"></div>
<svg style="left:16.8px;top:389.3px" width="5" height="6" viewBox="0 0 5 6"><path d="M3.500 0.800l-2.300 2.200 2.300 2.200" fill="none" stroke="#3a3a3a" stroke-width="1.100"/></svg>
<svg style="left:119.7px;top:389.3px" width="5" height="6" viewBox="0 0 5 6"><path d="M1.200 0.800l2.300 2.200-2.300 2.200" fill="none" stroke="#3a3a3a" stroke-width="1.100"/></svg>
<div class="a" style="left:14.7px;top:397.3px;width:30.2px;height:11.8px;background:#fcfcfc;"></div>
<svg style="left:17px;top:399px" width="6" height="8" viewBox="0 0 6 8"><path d="M1 7.500l2-6.500 2 6.500M1.700 5.500h2.600" fill="none" stroke="#78a8d8" stroke-width="0.700"/><path d="M0.500 7.800h5" stroke="#78a8d8" stroke-width="0.500"/></svg>
<div class="t " style="left:25.9px;top:399.5px;letter-spacing:-0.5px">Scene</div>
<div class="a" style="left:14.7px;top:396.9px;width:112.5px;height:0.6px;background:#b4b4b4;"></div>
<svg style="left:49px;top:399.5px" width="6" height="7" viewBox="0 0 6 7"><path d="M0.500 0.500h5v6h-5z" fill="#fff" stroke="#667" stroke-width="0.500"/><path d="M0.500 0.500h5v2h-5z" fill="#3c5a9a"/><path d="M1.500 3.500h1.500v1.500h-1.500z" fill="#3c5a9a"/></svg>
<div class="t " style="left:57.6px;top:399.5px;letter-spacing:-0.1px">Properties</div>
<svg style="left:92px;top:399.5px" width="8" height="8" viewBox="0 0 8 8"><circle cx="3" cy="3" r="2.300" fill="#eaf4fc" stroke="#6a9ed0" stroke-width="0.700"/><path d="M4.800 4.800l2.200 2.200" stroke="#6a9ed0" stroke-width="1"/></svg>
<div class="t " style="left:101.7px;top:399.5px;letter-spacing:-0.15px">Search</div>
<div class="a" style="left:3px;top:176.5px;width:8px;height:0;border-top:1px dotted #9a9a9a"></div>
<svg style="left:2px;top:182px" width="9" height="9" viewBox="0 0 9 9"><path d="M1 3l2-2h5v5l-2 2h-5z M1 3h5v5M6 3l2-2" fill="none" stroke="#c4c4c4" stroke-width="0.600"/></svg>
<svg style="left:2px;top:193px" width="9" height="9" viewBox="0 0 9 9"><path d="M1 3l2-2h5v5l-2 2h-5z M1 3h5v5M6 3l2-2" fill="none" stroke="#c4c4c4" stroke-width="0.600"/><circle cx="3" cy="6" r="1.800" fill="#e4e4e4" stroke="#c4c4c4" stroke-width="0.500"/></svg>
<div class="a" style="left:2px;top:206.5px;width:9px;height:0.5px;background:#cfcfcf;"></div>
<svg style="left:2px;top:209px" width="9" height="9" viewBox="0 0 9 9"><path d="M1 3l2-2h5v5l-2 2h-5z M1 3h5v5M6 3l2-2" fill="none" stroke="#c4c4c4" stroke-width="0.600"/><circle cx="3" cy="6" r="1.800" fill="#e4e4e4" stroke="#c4c4c4" stroke-width="0.500"/></svg>
<svg style="left:2px;top:220.5px" width="9" height="9" viewBox="0 0 9 9"><path d="M1 3l2-2h5v5l-2 2h-5z M1 3h5v5M6 3l2-2" fill="none" stroke="#c4c4c4" stroke-width="0.600"/><circle cx="3" cy="6" r="1.800" fill="#e4e4e4" stroke="#c4c4c4" stroke-width="0.500"/></svg>
<svg style="left:2px;top:232px" width="9" height="9" viewBox="0 0 9 9"><path d="M2 2h6v4h-6z" fill="none" stroke="#c8c8c8" stroke-width="0.600"/><circle cx="2.500" cy="6.500" r="1.800" fill="#eee" stroke="#c4c4c4" stroke-width="0.500"/></svg>
<div class="t" style="left:4.500px;top:241.500px;font-size:3.500px;color:#555">&#9666;</div>
<div class="a" style="left:3px;top:252px;width:8px;height:0;border-top:1px dotted #9a9a9a"></div>
<svg style="left:2px;top:256.7px" width="9" height="9" viewBox="0 0 9 9"><path d="M1 3h5.500v5.500h-5.500z" fill="#3f86d8" stroke="#4a6a9a" stroke-width="0.500"/><path d="M1 3l2-2h5.500l-2 2z" fill="#dfeaf8" stroke="#4a6a9a" stroke-width="0.500"/><path d="M6.500 3l2-2v5.500l-2 2z" fill="#fff" stroke="#4a6a9a" stroke-width="0.500"/></svg>
<svg style="left:2px;top:268.3px" width="9" height="9" viewBox="0 0 9 9"><path d="M1 3h5.500v5.500h-5.500z" fill="#fff" stroke="#4a6a9a" stroke-width="0.500"/><path d="M1 3l2-2h5.500l-2 2z" fill="#3f86d8" stroke="#4a6a9a" stroke-width="0.500"/><path d="M6.500 3l2-2v5.500l-2 2z" fill="#fff" stroke="#4a6a9a" stroke-width="0.500"/></svg>
<svg style="left:2px;top:279.9px" width="9" height="9" viewBox="0 0 9 9"><path d="M1 3h5.500v5.500h-5.500z" fill="#fff" stroke="#4a6a9a" stroke-width="0.500"/><path d="M1 3l2-2h5.500l-2 2z" fill="#fff" stroke="#4a6a9a" stroke-width="0.500"/><path d="M6.500 3l2-2v5.500l-2 2z" fill="#3f86d8" stroke="#4a6a9a" stroke-width="0.500"/></svg>
<svg style="left:2px;top:291.5px" width="9" height="9" viewBox="0 0 9 9"><path d="M1 3h5.500v5.500h-5.500z" fill="#fff" stroke="#4a6a9a" stroke-width="0.500"/><path d="M1 3l2-2h5.500l-2 2z" fill="#dfeaf8" stroke="#4a6a9a" stroke-width="0.500"/><path d="M6.500 3l2-2v5.500l-2 2z" fill="#fff" stroke="#4a6a9a" stroke-width="0.500"/></svg>
<svg style="left:2px;top:303.09999999999997px" width="9" height="9" viewBox="0 0 9 9"><path d="M1 3h5.500v5.500h-5.500z" fill="#dfeaf8" stroke="#4a6a9a" stroke-width="0.500"/><path d="M1 3l2-2h5.500l-2 2z" fill="#fff" stroke="#4a6a9a" stroke-width="0.500"/><path d="M6.500 3l2-2v5.500l-2 2z" fill="#3f86d8" stroke="#4a6a9a" stroke-width="0.500"/></svg>
<svg style="left:2px;top:314.7px" width="9" height="9" viewBox="0 0 9 9"><path d="M1 3h5.500v5.500h-5.500z" fill="#fff" stroke="#4a6a9a" stroke-width="0.500"/><path d="M1 3l2-2h5.500l-2 2z" fill="#fff" stroke="#4a6a9a" stroke-width="0.500"/><path d="M6.500 3l2-2v5.500l-2 2z" fill="#dfeaf8" stroke="#4a6a9a" stroke-width="0.500"/></svg>
<svg style="left:2px;top:326.29999999999995px" width="9" height="9" viewBox="0 0 9 9"><path d="M1 3h5.500v5.500h-5.500z" fill="#3f86d8" stroke="#4a6a9a" stroke-width="0.500"/><path d="M1 3l2-2h5.500l-2 2z" fill="#3f86d8" stroke="#4a6a9a" stroke-width="0.500"/><path d="M6.500 3l2-2v5.500l-2 2z" fill="#dfeaf8" stroke="#4a6a9a" stroke-width="0.500"/></svg>
<svg style="left:2px;top:337.9px" width="9" height="9" viewBox="0 0 9 9"><path d="M1 3h5.500v5.500h-5.500z" fill="#3f86d8" stroke="#4a6a9a" stroke-width="0.500"/><path d="M1 3l2-2h5.500l-2 2z" fill="#dfeaf8" stroke="#4a6a9a" stroke-width="0.500"/><path d="M6.500 3l2-2v5.500l-2 2z" fill="#3f86d8" stroke="#4a6a9a" stroke-width="0.500"/></svg>
<svg style="left:2px;top:349.5px" width="9" height="9" viewBox="0 0 9 9"><path d="M1 3h5.500v5.500h-5.500z" fill="#dfeaf8" stroke="#4a6a9a" stroke-width="0.500"/><path d="M1 3l2-2h5.500l-2 2z" fill="#3f86d8" stroke="#4a6a9a" stroke-width="0.500"/><path d="M6.500 3l2-2v5.500l-2 2z" fill="#3f86d8" stroke="#4a6a9a" stroke-width="0.500"/></svg>
<svg style="left:2px;top:361.09999999999997px" width="9" height="9" viewBox="0 0 9 9"><path d="M1 3h5.500v5.500h-5.500z" fill="#3f86d8" stroke="#4a6a9a" stroke-width="0.500"/><path d="M1 3l2-2h5.500l-2 2z" fill="#fff" stroke="#4a6a9a" stroke-width="0.500"/><path d="M6.500 3l2-2v5.500l-2 2z" fill="#3f86d8" stroke="#4a6a9a" stroke-width="0.500"/></svg>
<div class="t" style="left:4.500px;top:370.500px;font-size:3.500px;color:#555">&#9666;</div>
<div class="a" style="left:3px;top:381px;width:8px;height:0;border-top:1px dotted #9a9a9a"></div>
<svg style="left:2px;top:385.8px" width="9" height="9" viewBox="0 0 9 9"><path d="M1.500 1.500l6 6" stroke="#333" stroke-width="0.800"/><path d="M0.500 2.500l2-2M6.500 8.500l2-2" stroke="#333" stroke-width="0.600"/></svg>
<svg style="left:2px;top:397.5px" width="9" height="9" viewBox="0 0 9 9"><path d="M0.500 1v3M8.500 1v3M0.500 2h8" fill="none" stroke="#e03030" stroke-width="0.700"/><ellipse cx="4.500" cy="6.500" rx="2" ry="1.400" fill="#2a72d8"/></svg>
<svg style="left:2px;top:409.5px" width="9" height="9" viewBox="0 0 9 9"><path d="M1 0.500h3M1 8.500h3M2.500 0.500v8" fill="none" stroke="#e03030" stroke-width="0.700"/><ellipse cx="6.500" cy="4.500" rx="1.500" ry="1.800" fill="#2a72d8"/></svg>
<svg style="left:2px;top:420.8px" width="9" height="9" viewBox="0 0 9 9"><path d="M0.500 8h8l-2.500-6z" fill="none" stroke="#444" stroke-width="0.600"/><path d="M3.500 4.500l2.500-3" stroke="#444" stroke-width="0.500"/></svg>
<svg style="left:2px;top:433px" width="9" height="9" viewBox="0 0 9 9"><circle cx="4.500" cy="4.500" r="3.800" fill="#fff" stroke="#555" stroke-width="0.600"/><path d="M2 2l2.500 2.500" stroke="#333" stroke-width="0.600"/></svg>
<svg style="left:2px;top:444.5px" width="9" height="9" viewBox="0 0 9 9"><circle cx="4.500" cy="4.500" r="3.800" fill="#fff" stroke="#555" stroke-width="0.600"/><path d="M1.800 1.800l5.400 5.400" stroke="#333" stroke-width="0.600"/></svg>
<svg style="left:2px;top:459.5px" width="9" height="9" viewBox="0 0 9 9"><path d="M1 8l2-5h2.500" fill="none" stroke="#333" stroke-width="0.600"/></svg>
<div class="t" style="left:6.500px;top:458px;font-size:5px;font-weight:bold;color:#111">A</div>
<div class="a" style="left:5px;top:470px;width:3.5px;height:10px;background:#c4c4c4;"></div>
<div class="t" style="left:4.500px;top:481px;font-size:3.500px;color:#555">&#9666;</div>
<svg style="left:136px;top:373px" width="30" height="22" viewBox="0 0 30 22"><path d="M14.500 18v-7" stroke="#2a50e0" stroke-width="1"/><path d="M13.200 12l1.300-3.300 1.300 3.300z" fill="#2a50e0"/><path d="M14.500 18l-7-4 0.500 2.200 3 1.800z" fill="#18983a"/><path d="M14.500 18l7-4-0.500 2.200-3 1.800z" fill="#c82a20"/><path d="M13.500 17.200h2v1.800h-2z" fill="#f4f4f4"/><text x="13" y="6" font-size="5" font-weight="bold" fill="#2a50e0" font-family="Liberation Sans, sans-serif">Z</text><text x="2.500" y="12.500" font-size="5" fill="#20a040" font-family="Liberation Sans, sans-serif">Y</text><text x="24" y="12.500" font-size="5" fill="#e04030" font-family="Liberation Sans, sans-serif">X</text></svg>
<svg style="left:131px;top:97px" width="893" height="313" viewBox="131 97 893 313">
<defs>
<linearGradient id="cyl" x1="0" x2="1" y1="0" y2="0">
<stop offset="0" stop-color="#7a724e"/><stop offset="0.13" stop-color="#7e7650"/><stop offset="0.18" stop-color="#7b7352"/><stop offset="0.35" stop-color="#857d5c"/><stop offset="0.5" stop-color="#938b6a"/><stop offset="0.53" stop-color="#999172"/><stop offset="0.8" stop-color="#979070"/><stop offset="0.87" stop-color="#8e8660"/><stop offset="1" stop-color="#8a8258"/>
</linearGradient>
<linearGradient id="base" x1="0" x2="1" y1="0" y2="0">
<stop offset="0" stop-color="#7e7974"/><stop offset="0.5" stop-color="#8c8680"/><stop offset="1" stop-color="#827c76"/>
</linearGradient>
</defs>
<!-- base disk -->
<path d="M572 361v14c0 5.500 9 10 20 10s20-4.500 20-10v-14z" fill="url(#base)" stroke="#6e6a64" stroke-width="0.500"/>
<ellipse cx="592" cy="361" rx="20" ry="8.600" fill="#99938a" stroke="#76726a" stroke-width="0.500"/>
<!-- cylinder -->
<path d="M578 124v239c0 3 6 5.300 14 5.300s13.600-2.300 13.600-5.300v-239c0-5-4.600-10-13.600-10s-14 5-14 10z" fill="url(#cyl)"/>
<path d="M578 124c0-5 5-10 14-10s13.600 5 13.600 10c0 4-5.600 7-13.600 7s-14-3-14-7z" fill="#a39b74"/>
<!-- yellow selection lines -->
<g fill="none" stroke="#f4f06a" stroke-width="0.700">
<path d="M578 124c0-5.500 5-10 14-10s13.600 4.500 13.600 10" stroke="#e8e470"/>
<path d="M605.500 124v238" stroke="#62626e" stroke-width="0.500" stroke-dasharray="0.700 0.700"/>
<path d="M582.300 128v238" stroke="#f2ee5c" stroke-width="1.300"/>
<path d="M592.500 135v232" stroke="#d6ce80" stroke-width="0.600"/>
<path d="M601.700 125v240" stroke-dasharray="2 1.400" stroke="#f0e860" stroke-width="1"/>
<path d="M572.600 124v237M611.600 124v237" stroke="#d9d88c" stroke-width="0.700"/>
<path d="M572.700 124l19.300-10 19.700 10-19.700 11.300z" stroke="#f0e870" stroke-width="0.600"/>
<path d="M572.700 361l19.300-9 19.700 9-19.700 10.600z" stroke="#f0e870" stroke-width="0.700"/>
<path d="M578 363c0 3 6 5.300 14 5.300s13.600-2.300 13.600-5.300" />
<path d="M582 127l10 5.500 10-5" stroke="#f0e870" stroke-width="0.500"/>
</g>
<!-- top dimension -->
<path d="M592 97.500v25.500" stroke="#4e4e4e" stroke-width="1.200"/>
<g stroke="#0a0a0a" stroke-width="1" fill="none">
<path d="M592 104.400l-19.500 10.200M592 104.400l19.700 10.200"/>
<path d="M572.500 108.500v13.500M611.700 108.500v19"/>
<path d="M619.200 131v109.500M619.200 254v112" stroke-width="1.300"/>
<path d="M612.300 362l12.700 8"/>
</g>
<g fill="#111">
<path d="M592 104.400l-5 1 1.600 2.800zM592 104.400l5 1-1.600 2.800z"/>
<path d="M572.500 114.600l5-0.800-1.500-2.900zM611.700 114.600l-5-0.800 1.500-2.900z"/>
<path d="M619 128.500l-1.800 5.500h3.600zM619 367l-1.800-5.500h3.600z"/>
<path d="M616 131.800l6-1.800v1l-6 1.800zM616 366.500l6-2v1l-6 2z"/>
</g>
<circle cx="592" cy="115.500" r="2.200" fill="#1414d0" stroke="#223" stroke-width="0.400"/>
<text x="555.500" y="131" font-size="10.700" fill="#0a0a0a" stroke="#0a0a0a" stroke-width="0.150" font-family="Liberation Sans, sans-serif">22.000</text>
<text x="594.700" y="131" font-size="10.700" fill="#0a0a0a" stroke="#0a0a0a" stroke-width="0.150" font-family="Liberation Sans, sans-serif">22.000</text>
<text x="600.300" y="251" font-size="10.700" fill="#0a0a0a" stroke="#0a0a0a" stroke-width="0.150" font-family="Liberation Sans, sans-serif">231.000</text>
<text x="585" y="229" font-size="10.700" fill="#22e2ea" stroke="#22e2ea" stroke-width="0.150" font-family="Liberation Sans, sans-serif">22.000</text>
<!-- handles -->
<g stroke="#111" stroke-width="0.700">
<path d="M575.400 233.300l6.600 3.700M575.400 252.600l6.600-3.600M608.600 252.600l-8-3.600"/>
</g>
<path d="M581.500 249l20.800-12" stroke="#22e2ea" stroke-width="0.900"/>
<path d="M581.500 249l5.200-1.200-1.400-2.400zM602.300 237l-5.200 1.200 1.400 2.400z" fill="#22e2ea"/>
<g stroke="#111" stroke-width="0.500">
<circle cx="575.400" cy="233.300" r="1.900" fill="#18a838"/>
<circle cx="608.300" cy="233.300" r="1.900" fill="#d02030"/>
<circle cx="575.400" cy="252.600" r="1.900" fill="#f0d818"/>
<circle cx="608.600" cy="252.600" r="1.900" fill="#18a838"/>
<circle cx="603" cy="236.700" r="1.300" fill="#f0c818"/>
<circle cx="596.300" cy="241" r="1.300" fill="#f0d818"/>
</g>
<!-- bottom markers -->
<path d="M592 352v22" stroke="#18a098" stroke-width="1.400"/>
<circle cx="592.300" cy="363" r="2.400" fill="#20988c" stroke="#0c5c58" stroke-width="0.500"/>
<circle cx="592" cy="370.300" r="2" fill="#1414c8" stroke="#112" stroke-width="0.400"/>
<circle cx="585.600" cy="357" r="4" fill="#5cc0f0"/><circle cx="585" cy="356" r="2.300" fill="#c8ecfc"/><path d="M585.600 355v3" stroke="#1860c0" stroke-width="0.600"/>
<circle cx="596" cy="356.500" r="2" fill="#f4f4f4" stroke="#111" stroke-width="0.800"/><path d="M596.500 359.500h2v1.500h-2z" fill="#e8f0f0" stroke="#355" stroke-width="0.300"/>
<path d="M578.700 373.500h10.200v10.200h-10.200z" fill="#fff" stroke="#ddd" stroke-width="0.300"/>
<circle cx="583.800" cy="378.600" r="2.700" fill="#ddd" stroke="#111" stroke-width="1.100"/>
<path d="M583.800 374.500v2M583.800 380.700v2M579.700 378.600h2M585.900 378.600h2" stroke="#e02020" stroke-width="0.800"/>
<circle cx="584.600" cy="379.400" r="1" fill="#111"/>
</svg>
<div class="a" style="left:336.300px;top:193.500px;width:178.300px;height:71px;background:#f0f0f0;border:0.6px solid #6c6c6c;box-sizing:border-box;box-shadow:0 1px 5px rgba(0,0,0,0.35)"></div>
<div class="a" style="left:337.6px;top:194.1px;width:176.3px;height:16px;background:#fff;"></div>
<div class="t " style="left:341.5px;top:198.6px;color:#111;font-size:6.3px;letter-spacing:-0.1px">Edit Sizebox</div>
<svg style="left:503px;top:198.8px" width="6" height="6" viewBox="0 0 6 6"><path d="M0.500 0.500l4.800 4.800M5.300 0.500l-4.800 4.800" stroke="#222" stroke-width="0.700"/></svg>
<div class="t " style="left:342.7px;top:218.6px;color:#111;font-size:6.3px;letter-spacing:-0.12px">Length:</div>
<div class="t " style="left:342.7px;top:233.3px;color:#111;font-size:6.3px;letter-spacing:-0.12px">Width:</div>
<div class="t " style="left:342.7px;top:248.2px;color:#111;font-size:6.3px;letter-spacing:-0.12px">Height:</div>
<div class="a" style="left:369px;top:216.3px;width:79.7px;height:11.6px;background:#fff;border:0.8px solid #3c8ce8;box-sizing:border-box"></div>
<div class="a" style="left:369px;top:231.2px;width:79.7px;height:11.6px;background:#fff;border:0.5px solid #a2a2a2;box-sizing:border-box"></div>
<div class="a" style="left:369px;top:246.2px;width:79.7px;height:12px;background:#fff;border:0.5px solid #a2a2a2;box-sizing:border-box"></div>
<div class="a" style="left:370.5px;top:218.3px;width:6.8px;height:7.6px;background:#3a88e8;"></div>
<div class="t " style="left:370.7px;top:218.3px;color:#dfeaff;font-size:6.3px;letter-spacing:-0.1px">22</div>
<div class="t " style="left:370.7px;top:233.1px;color:#111;font-size:6.3px;letter-spacing:-0.1px">22</div>
<div class="t " style="left:370.7px;top:248.1px;color:#111;font-size:6.3px;letter-spacing:-0.1px">231</div>
<div class="a" style="left:468.8px;top:216.4px;width:38.8px;height:11.3px;background:#e4e4e4;border:1.100px solid #3a7ee0;box-sizing:border-box"></div>
<div class="a" style="left:468.8px;top:230.4px;width:38.8px;height:10.2px;background:#e2e2e2;border:0.6px solid #b6b6b6;box-sizing:border-box"></div>
<div class="a" style="left:468.8px;top:244.1px;width:38.8px;height:10.4px;background:#e2e2e2;border:0.6px solid #b6b6b6;box-sizing:border-box"></div>
<div class="t c " style="left:488.2px;top:218.2px;color:#111">OK</div>
<div class="t c " style="left:488.2px;top:231.6px;color:#111">Cancel</div>
<div class="t c " style="left:488.2px;top:245.5px;color:#111">Help</div>
<div class="a" style="left:14px;top:410px;width:1010px;height:131px;background:#e6e6e6;"></div>
<div class="a" style="left:14px;top:409.5px;width:1010px;height:3.5px;background:#ececec;"></div>
<div class="t " style="left:16px;top:415.5px;letter-spacing:-0.12px">Shapes</div>
<svg style="left:1005.9000000000001px;top:418.9px" width="4.6" height="2.6" viewBox="0 0 4.6 2.6"><path d="M0 0h4.6l-2.3 2.6z" fill="#585858"/></svg>
<svg style="left:1016.4px;top:417.2px" width="4" height="6" viewBox="0 0 4 6"><path d="M0.900 0.600h2.400v2.600h-2.400z" fill="#f6f6f6" stroke="#444" stroke-width="0.700"/><path d="M0.200 3.300h3.800M2.100 3.300v2.400" fill="none" stroke="#444" stroke-width="0.700"/></svg>
<div class="a" style="left:15px;top:426.8px;width:40.5px;height:9.6px;background:#ececec;border:0.5px solid #bdbdbd;box-sizing:border-box"></div>
<svg style="left:17.5px;top:427.8px" width="8" height="8" viewBox="0 0 8 8"><path d="M1 0.800h5v6.500h-5z" fill="#fff" stroke="#777" stroke-width="0.500"/><path d="M2 3h3M2 4.500h3" stroke="#aaa" stroke-width="0.400"/></svg>
<div class="t c " style="left:40.75px;top:427.8px;color:#1a1a1a"><span style="display:inline-block;transform:scaleX(0.86)">New</span></div>
<div class="a" style="left:57.3px;top:426.8px;width:40.5px;height:9.6px;background:#ececec;border:0.5px solid #bdbdbd;box-sizing:border-box"></div>
<svg style="left:59.8px;top:427.8px" width="8" height="8" viewBox="0 0 8 8"><path d="M1 0.800h3.500v6.500h-3.500z" fill="#fff" stroke="#777" stroke-width="0.500"/><path d="M5.500 2v5.500" stroke="#c8a030" stroke-width="0.600"/></svg>
<div class="t c " style="left:83.05px;top:427.8px;color:#1a1a1a"><span style="display:inline-block;transform:scaleX(0.86)">Open</span></div>
<div class="a" style="left:99.6px;top:426.8px;width:40.5px;height:9.6px;background:#ececec;border:0.5px solid #bdbdbd;box-sizing:border-box"></div>
<svg style="left:102.1px;top:427.8px" width="8" height="8" viewBox="0 0 8 8"><path d="M0.800 1.500h6v6h-6z" fill="#6a5a4a"/><path d="M2 1.500h3.500v2.300h-3.500z" fill="#f0f0f0"/><path d="M2.300 5.500h3v2h-3z" fill="#d0d0d0"/><path d="M7 0.500v2.500" stroke="#c03030" stroke-width="0.500"/></svg>
<div class="t c " style="left:125.35px;top:427.8px;color:#1a1a1a"><span style="display:inline-block;transform:scaleX(0.86)">Save</span></div>
<div class="a" style="left:141.9px;top:426.8px;width:41px;height:9.6px;background:#ececec;border:0.5px solid #bdbdbd;box-sizing:border-box"></div>
<svg style="left:144.4px;top:427.8px" width="8" height="8" viewBox="0 0 8 8"><path d="M1 0.800h4v6.500h-4z" fill="#fff" stroke="#999" stroke-width="0.500"/><path d="M6 5.500v2" stroke="#c8a030" stroke-width="0.500"/></svg>
<div class="t c " style="left:167.9px;top:427.8px;color:#1a1a1a"><span style="display:inline-block;transform:scaleX(0.86)">Close</span></div>
<div class="a" style="left:184.7px;top:426.8px;width:838.5px;height:9.6px;background:#ececec;border:0.5px solid #bdbdbd;box-sizing:border-box"></div>
<div class="a" style="left:14px;top:437.5px;width:1000px;height:9.5px;background:#fff;"></div>
<div class="t " style="left:16px;top:438.3px;color:#6a6a6a;letter-spacing:-0.2px">Search ...</div>
<div class="a" style="left:1014.5px;top:437.5px;width:8.5px;height:9.5px;background:#f2eee8;border:0.5px solid #d4d4d4;box-sizing:border-box"></div>
<svg style="left:1015.3px;top:438.8px" width="7" height="7" viewBox="0 0 7 7"><path d="M0.500 0.500l6 6M6.500 0.500l-6 6" stroke="#e8301c" stroke-width="1.300"/></svg>
<div class="a" style="left:14.5px;top:447.7px;width:999px;height:70px;background:#fff;border:0.5px solid #c4c4c4;box-sizing:border-box"></div>
<div class="a" style="left:1014px;top:448px;width:10px;height:70px;background:#f1f1f1;"></div>
<div class="a" style="left:1015px;top:458.5px;width:7.5px;height:49px;background:#c9c9c9;"></div>
<svg style="left:1016px;top:451px" width="6" height="5" viewBox="0 0 6 5"><path d="M0.800 3.500l2.200-2.300 2.200 2.300" fill="none" stroke="#555" stroke-width="0.900"/></svg>
<svg style="left:1016px;top:510.5px" width="6" height="5" viewBox="0 0 6 5"><path d="M0.800 1.200l2.200 2.300 2.200-2.300" fill="none" stroke="#555" stroke-width="0.900"/></svg>
<svg style="left:26.0px;top:450px" width="17" height="16" viewBox="0 0 17 16"><path d="M9.3 0.9L16.3 3.6L8.500 6.700L1.200 4z" fill="#e6f0ec" stroke="#9db2ac" stroke-width="0.25"/><path d="M1.200 4L8.500 6.700L8.500 16L1.800 12.600z" fill="#cfdfd9" stroke="#9db2ac" stroke-width="0.25"/><path d="M8.500 6.700L16.300 3.600L15.900 12.300L8.500 16z" fill="#b2c6c0" stroke="#9db2ac" stroke-width="0.25"/></svg>
<div class="t c " style="left:34.5px;top:468.5px;color:#161616">Extrude</div>
<svg style="left:66.0px;top:450px" width="17" height="16" viewBox="0 0 17 16"><path d="M10.250 11.400L17.300 4.800L15.400 10.300L11.500 15.400z" fill="#eef1f4" stroke="#ccd" stroke-width="0.2"/><path d="M0.250 7.600L7.600 1.200L17.300 4.800L10.250 11.400z" fill="#28307e" stroke="#28307e" stroke-width="0.2"/><path d="M2.900 7.600L7.750 3.250L14.600 5.100L9.900 9.500z" fill="#eef2f6" stroke="none" stroke-width="0"/></svg>
<div class="t c " style="left:74.5px;top:468.5px;color:#161616">Cut Extude</div>
<svg style="left:106.0px;top:450px" width="17" height="16" viewBox="0 0 17 16"><path d="M0.400 1.700L4.600 1.400L16.500 13.900L5.900 13.400z" fill="#e6f0ec" stroke="#9db2ac" stroke-width="0.25"/><path d="M0.400 1.700L5.900 13.400L5.900 14.600L0.400 2.900z" fill="#b2c6c0" stroke="#9db2ac" stroke-width="0.25"/><path d="M5.900 13.400L16.500 13.900L16.500 14.900L5.900 14.600z" fill="#b2c6c0" stroke="#9db2ac" stroke-width="0.25"/></svg>
<div class="t c " style="left:114.5px;top:468.5px;color:#161616">Slab</div>
<svg style="left:146.0px;top:450px" width="17" height="16" viewBox="0 0 17 16"><path d="M-0.050 9.200L7.300 1.200L17.100 5.600L10.400 15.750z" fill="#28307e" stroke="#28307e" stroke-width="0.2"/><path d="M3.100 9.200L7.750 3.250L14.300 6.100L9.600 13.400z" fill="#e9eef4" stroke="none" stroke-width="0"/><path d="M9.600 13.400L14.300 6.100L13.300 6L9 12z" fill="#fbfcfd" stroke="none" stroke-width="0"/></svg>
<div class="t c " style="left:154.5px;top:468.5px;color:#161616">Cut Slab</div>
<svg style="left:186.0px;top:450px" width="17" height="16" viewBox="0 0 17 16"><path d="M1.800 5c0-3 3-4 6.500-3.300l5 1.200c2.500 0.800 2.800 2.300 2.600 4v6.500c0 2.500-1.500 3.500-4 3l-6-2c-3-1-4-2.500-4.100-4.400z" fill="#cfdfd9" stroke="#9db2ac" stroke-width="0.250"/><path d="M1.800 5c0-3 3-4 6.500-3.300l5 1.200c2.500 0.800 2.800 2.300 2.600 4-1.500 1.500-3 1-4.500 0.500l-6-1.800c-2-0.600-3-0.600-3.600-0.600z" fill="#e6f0ec"/><path d="M11.500 7.500c1.500 0.500 3 0.800 4.400-0.600v6.500c0 2.500-1.500 3.500-4 3z" fill="#b2c6c0"/></svg>
<div class="t c " style="left:194.5px;top:468.5px;color:#161616">Slot</div>
<svg style="left:226.0px;top:450px" width="17" height="16" viewBox="0 0 17 16"><path d="M3.700 0.900L17 4L13.800 12.600L0.250 8.700z" fill="#28307e" stroke="#28307e" stroke-width="0.2"/><ellipse cx="9.400" cy="6.900" rx="2.300" ry="5.400" transform="rotate(-33 9.400 6.900)" fill="#eef2f6"/><ellipse cx="10.200" cy="7.600" rx="1.500" ry="4.300" transform="rotate(-33 10.200 7.600)" fill="#cdd6e2"/><path d="M7 13.500l5-0.800-1 1.300z" fill="#e4e4e8"/></svg>
<div class="t c " style="left:234.5px;top:468.5px;color:#161616">Cut Slot</div>
<svg style="left:266.0px;top:450px" width="17" height="16" viewBox="0 0 17 16"><path d="M1.200 4v9c0 2 3.400 3.500 7.600 3.500s7.700-1.500 7.700-3.500v-9z" fill="#cfdfd9" stroke="#9db2ac" stroke-width="0.250"/><path d="M11 7v9.300c3-0.300 5.500-1.500 5.500-3.300v-9z" fill="#b2c6c0"/><ellipse cx="8.850" cy="4" rx="7.650" ry="3.400" fill="#e6f0ec" stroke="#9db2ac" stroke-width="0.250"/></svg>
<div class="t c " style="left:274.5px;top:468.5px;color:#161616">Cylinder</div>
<svg style="left:306.0px;top:450px" width="17" height="16" viewBox="0 0 17 16"><path d="M0 7.600L8.100 0.900L17.100 7.600L8.100 14.200z" fill="#28307e" stroke="#28307e" stroke-width="0.2"/><path d="M4 6.700c0 2 1.500 3 2.200 5.500l3.800 1 1.500-3.500c0.500-1 0.800-2 0.800-3z" fill="#d6dce6"/><ellipse cx="8.100" cy="6.700" rx="4.200" ry="3" fill="#f1f4f8"/><ellipse cx="8.300" cy="7.400" rx="3.200" ry="2.100" fill="#c4ccd8"/></svg>
<div class="t c " style="left:314.5px;top:468.5px;color:#161616">Cut Cylinder</div>
<svg style="left:346.0px;top:450px" width="17" height="16" viewBox="0 0 17 16"><path d="M1.200 7v5.500c0 2.500 3 3.800 6.500 3.300s8.200-3.800 8.200-7.300v-5.500z" fill="#cfdfd9" stroke="#9db2ac" stroke-width="0.250"/><path d="M10 10v5c3-1 5.900-3.500 5.900-6.500v-5.500z" fill="#b2c6c0"/><ellipse cx="8.550" cy="5.200" rx="7.700" ry="4.200" transform="rotate(-18 8.550 5.200)" fill="#e6f0ec" stroke="#9db2ac" stroke-width="0.250"/></svg>
<div class="t c " style="left:354.5px;top:468.5px;color:#161616">Ellipse</div>
<svg style="left:386.0px;top:450px" width="17" height="16" viewBox="0 0 17 16"><path d="M0.250 7.200L8.400 0.900L17.300 7.200L9.200 13.900z" fill="#28307e" stroke="#28307e" stroke-width="0.2"/><path d="M5.200 7c0 2 1.300 3 2 5l3.500 0.800 1.500-3c0.700-1.200 1-2 1-3z" fill="#d6dce6"/><ellipse cx="9.200" cy="6.700" rx="4.200" ry="3.200" transform="rotate(-15 9.200 6.700)" fill="#f1f4f8"/><ellipse cx="9.400" cy="7.400" rx="3.100" ry="2.200" transform="rotate(-15 9.400 7.400)" fill="#bfc8d6"/></svg>
<div class="t c " style="left:394.5px;top:468.5px;color:#161616">Cut Ellipse</div>
<svg style="left:426.0px;top:450px" width="17" height="16" viewBox="0 0 17 16"><path d="M1.200 7.200L6.700 1.700L14 1.400L17.100 6.700L10 9.500z" fill="#e6f0ec" stroke="#9db2ac" stroke-width="0.25"/><path d="M1.200 7.200L10 9.500L9 15.400L2.750 11.800z" fill="#cfdfd9" stroke="#9db2ac" stroke-width="0.25"/><path d="M10 9.500L17.100 6.700L15 11L9 15.400z" fill="#b2c6c0" stroke="#9db2ac" stroke-width="0.25"/></svg>
<div class="t c " style="left:434.5px;top:468.5px;color:#161616">Poly</div>
<svg style="left:466.0px;top:450px" width="17" height="16" viewBox="0 0 17 16"><ellipse cx="13.800" cy="11.500" rx="3" ry="2.300" fill="#dcdce0"/><path d="M6.500 1.400L17.100 1.400L10.400 13.400L-0.060 11.400z" fill="#28307e" stroke="#28307e" stroke-width="0.2"/><ellipse cx="8.300" cy="7.200" rx="3" ry="5" transform="rotate(25 8.300 7.200)" fill="#eef2f6"/><ellipse cx="8.800" cy="7.600" rx="2.100" ry="3.900" transform="rotate(25 8.800 7.600)" fill="#c4ccd8"/></svg>
<div class="t c " style="left:474.5px;top:468.5px;color:#161616">Cut Poly</div>
<svg style="left:506.0px;top:450px" width="17" height="16" viewBox="0 0 17 16"><circle cx="8.500" cy="7.900" r="7.500" fill="#cfdfd9" stroke="#9db2ac" stroke-width="0.250"/><circle cx="7.500" cy="6.800" r="5" fill="#e6f0ec"/><path d="M4 6c1-2.500 4-3.500 6.500-2" fill="none" stroke="#f6faf8" stroke-width="1.200"/><path d="M13 11c-1 2-3.500 3-6 2.500" fill="none" stroke="#b2c6c0" stroke-width="1.200"/></svg>
<div class="t c " style="left:514.5px;top:468.5px;color:#161616">Sphere</div>
<svg style="left:546.0px;top:450px" width="17" height="16" viewBox="0 0 17 16"><path d="M6 5c3-3 9-2.500 10 1s-2 7.500-5.500 8-6.500-5.500-4.500-9z" fill="#dfe5ee"/><path d="M8 6c2-1.500 5-1 5.500 1s-1 4.500-3 5-3.800-3.500-2.500-6z" fill="#c2cad8"/><path d="M0.250 8.700L9.200 1.700L16.200 2.500L14.500 5M0.250 8.700L7.500 11.500" fill="none" stroke="#28307e" stroke-width="1.100"/></svg>
<div class="t c " style="left:554.5px;top:468.5px;color:#161616">Cut Sphere</div>
<svg style="left:586.0px;top:450px" width="17" height="16" viewBox="0 0 17 16"><path d="M2.400 0.900C8 0.500 13 1.500 16 4L7 8z" fill="#e6f0ec" stroke="#9db2ac" stroke-width="0.25"/><path d="M2.400 0.900L7 8L7.400 16z" fill="#cfdfd9" stroke="#9db2ac" stroke-width="0.25"/><path d="M7 8L16 4L15.250 11C13 14 10 15.500 7.400 16z" fill="#b2c6c0" stroke="#9db2ac" stroke-width="0.25"/></svg>
<div class="t c " style="left:594.5px;top:468.5px;color:#161616">Pie</div>
<svg style="left:626.0px;top:450px" width="17" height="16" viewBox="0 0 17 16"><path d="M12.400 3.250c3 0.500 4.500 2 4.300 3.800s-2 3-4.300 3.250z" fill="#e6e8ec" stroke="#ccd" stroke-width="0.200"/><path d="M1.800 1.400L12.400 4L11.500 16.500L1.800 12.600z" fill="#28307e" stroke="#28307e" stroke-width="0.2"/><path d="M6.800 5v6.500c-2-0.300-3.200-1.800-3.200-3.300s1.200-3 3.200-3.200z" fill="#eef2f6"/><path d="M6.800 8.250h3.500" stroke="#dfe5ee" stroke-width="1.500"/></svg>
<div class="t c " style="left:634.5px;top:468.5px;color:#161616">Cut Pie</div>
<svg style="left:666.0px;top:450px" width="17" height="16" viewBox="0 0 17 16"><circle cx="8.500" cy="8.250" r="5.750" fill="none" stroke="#b4c8c2" stroke-width="3.500"/><circle cx="8.500" cy="8.250" r="7.500" fill="none" stroke="#9db2ac" stroke-width="0.400"/><circle cx="8.500" cy="8.250" r="4" fill="none" stroke="#9db2ac" stroke-width="0.400"/><path d="M3.500 6c1-2.500 4-3.500 6.500-3" fill="none" stroke="#e6f0ec" stroke-width="1.200"/></svg>
<div class="t c " style="left:674.5px;top:468.5px;color:#161616">Torus</div>
<svg style="left:706.0px;top:450px" width="17" height="16" viewBox="0 0 17 16"><path d="M3.700 0.900L17.300 3.250L13 16L0.250 12.600z" fill="#28307e" stroke="#28307e" stroke-width="0.2"/><circle cx="9.200" cy="7.900" r="4.900" fill="#dfe5ee"/><circle cx="9.200" cy="7.900" r="3.600" fill="#f1f4f8"/><ellipse cx="9.200" cy="8" rx="2.200" ry="1.900" fill="#3a4290"/></svg>
<div class="t c " style="left:714.5px;top:468.5px;color:#161616">Cut Torus</div>
<svg style="left:746.0px;top:450px" width="17" height="16" viewBox="0 0 17 16"><path d="M16 0.900L1.200 8.700c-1 2 0 4.500 3 6s5.500 1 6.300 0z" fill="#cfdfd9" stroke="#9db2ac" stroke-width="0.250"/><path d="M16 0.900L6 14c1.500 1.500 3.500 1.500 4.500 0.700z" fill="#b2c6c0"/><path d="M16 0.900L1.500 8.500c1 0 2.500 0.300 3.500 1z" fill="#e6f0ec"/></svg>
<div class="t c " style="left:754.5px;top:468.5px;color:#161616">Cone</div>
<svg style="left:786.0px;top:450px" width="17" height="16" viewBox="0 0 17 16"><path d="M14.300 1.400L16.600 13.400L6.500 11.800L7 6.400z" fill="#dde4ee" stroke="#bcc" stroke-width="0.2"/><path d="M12 3l3 9.500" stroke="#f4f6fa" stroke-width="1.200"/><path d="M10.400 0.900L14.300 1.400L13.500 2.300L11 2.500L5.500 11.500L8 13L6.500 14.200L0.500 13.400z" fill="#28307e" stroke="#28307e" stroke-width="0.2"/></svg>
<div class="t c " style="left:794.5px;top:468.5px;color:#161616">Cut Cone</div>
<svg style="left:826.0px;top:450px" width="17" height="16" viewBox="0 0 17 16"><path d="M9.300 0.900L0.700 16L9.800 16z" fill="#bccfc6" stroke="#9db2ac" stroke-width="0.25"/><path d="M9.300 0.900L9.800 16L16.800 16z" fill="#98b0a6" stroke="#9db2ac" stroke-width="0.25"/><path d="M9.300 0.900L5 16" stroke="#d4e4de" stroke-width="0.600"/></svg>
<div class="t c " style="left:834.5px;top:468.5px;color:#161616">Pyramid</div>
<svg style="left:866.0px;top:450px" width="17" height="16" viewBox="0 0 17 16"><path d="M10.500 1.800L14 1.800L16.200 12.600L3.500 12.400z" fill="#dde4ee" stroke="#bcc" stroke-width="0.2"/><path d="M12 2l-2.500 10.500" stroke="#f4f6fa" stroke-width="0.800"/><path d="M12 2l4 10.500" stroke="#c4ccd8" stroke-width="0.800"/><path d="M9.200 0.900L14.300 0.900L14.200 1.900L10.700 1.900L4.200 11.800L7 12.200L5.500 14.300L0.600 12.600z" fill="#28307e" stroke="#28307e" stroke-width="0.2"/></svg>
<div class="t c " style="left:874.5px;top:468.5px;color:#161616">Cut Pyramid</div>
<svg style="left:906.0px;top:450px" width="17" height="16" viewBox="0 0 17 16"><path d="M11 0.900c3.500 0 5.800 3 5.800 6.500s-2.500 7-5 8.300c-6-0.500-10.900-3-10.900-7s6-7 10.100-7.800z" fill="#cfdfd9" stroke="#9db2ac" stroke-width="0.250"/><path d="M11 0.900c3.500 0 5.800 3 5.800 6.500s-2.500 7-5 8.300c1.500-3 2-5.500 1.800-8s-1-5-2.600-6.800z" fill="#b2c6c0"/><path d="M1 8.500c2-3.500 6-6 10-7.500" fill="none" stroke="#e6f0ec" stroke-width="1.200"/></svg>
<div class="t c " style="left:914.5px;top:468.5px;color:#161616">Part Cone</div>
<svg style="left:946.0px;top:450px" width="17" height="16" viewBox="0 0 17 16"><path d="M11 1.800h3c1.500 1.500 2.300 3.500 2 5.500l-3 1.200-2 4-6 0.300z" fill="#dde4ee" stroke="#bcc" stroke-width="0.200"/><path d="M12.500 2.500c-2 3-3.500 6-5 10" fill="none" stroke="#f6f8fb" stroke-width="1.300"/><path d="M8.800 0.900L14.300 0.900L14.200 1.900L10.400 2L4.300 11.700L7.500 12.700L6.500 14.200L0.560 12.600z" fill="#28307e" stroke="#28307e" stroke-width="0.2"/></svg>
<div class="t c " style="left:954.5px;top:468.5px;color:#161616">Cut Part</div>
<div class="t c " style="left:954.5px;top:476.7px;color:#161616">Cone</div>
<svg style="left:26.0px;top:490px" width="17" height="16" viewBox="0 0 17 16"><path d="M1.100 4.400L13.400 0.500L16.300 2.500L5 6.500z" fill="#e6f0ec" stroke="#9db2ac" stroke-width="0.25"/><path d="M1.100 4.400L5 6.500L10.500 16.100L1.700 11.600z" fill="#cfdfd9" stroke="#9db2ac" stroke-width="0.25"/><path d="M5 6.500L16.300 2.500L10.500 16.100z" fill="#b2c6c0" stroke="#9db2ac" stroke-width="0.25"/></svg>
<div class="t c " style="left:34.5px;top:508.29999999999995px;color:#161616">Bar</div>
<svg style="left:66.0px;top:490px" width="17" height="16" viewBox="0 0 17 16"><path d="M1.700 0.500L16.400 12.600L13.500 16.100L1.300 11.600z" fill="#b2c6c0" stroke="#9db2ac" stroke-width="0.25"/><path d="M1.700 0.500L3.500 0.800L16.400 12.600L15 13z" fill="#e6f0ec" stroke="#9db2ac" stroke-width="0.25"/><path d="M1.300 11.600L13.500 16.100L16.400 12.600L15 13L13 15z" fill="#cfdfd9" stroke="#9db2ac" stroke-width="0.25"/></svg>
<div class="t c " style="left:74.5px;top:508.29999999999995px;color:#161616">Rib</div>
<svg style="left:106.0px;top:490px" width="17" height="16" viewBox="0 0 17 16"><path d="M6 7l6 1-2.500 5h-4.500z" fill="#cfdfd9"/><ellipse cx="6.700" cy="13.600" rx="4" ry="2.400" fill="#cfdfd9" stroke="#9db2ac" stroke-width="0.250"/><ellipse cx="6.700" cy="13.800" rx="2" ry="1" fill="#f2f7f6"/><ellipse cx="9.600" cy="5.200" rx="7.200" ry="4.200" transform="rotate(-12 9.600 5.200)" fill="#e6f0ec" stroke="#9db2ac" stroke-width="0.250"/><path d="M7 9l1 4" stroke="#b2c6c0" stroke-width="1.200"/></svg>
<div class="t c " style="left:114.5px;top:508.29999999999995px;color:#161616">L3 Circles</div>
<svg style="left:146.0px;top:490px" width="17" height="16" viewBox="0 0 17 16"><path d="M5 0.800l8.500 3-2 4-8-1z" fill="#e6f0ec" stroke="#9db2ac" stroke-width="0.250"/><path d="M3.500 6.800l8 1c3 1 3.500 3 1.500 4.500l-6 4-5-4c-1.500-2 0-4.500 1.500-5.500z" fill="#cfdfd9" stroke="#9db2ac" stroke-width="0.250"/><path d="M7 9c3 0.500 5 2 3.500 3.800l-4 3" fill="none" stroke="#b2c6c0" stroke-width="1.400"/><path d="M3 8c2 0 3.500 1 4 2.500" fill="none" stroke="#f2f7f6" stroke-width="1"/></svg>
<div class="t c " style="left:154.5px;top:508.29999999999995px;color:#161616">Twist</div>
<svg style="left:186.0px;top:490px" width="17" height="16" viewBox="0 0 17 16"><path d="M1.300 16.100L3.800 7.700L15.500 0.500L15.500 14.600z" fill="#cfdfd9" stroke="#9db2ac" stroke-width="0.25"/><path d="M14.500 1.100L15.500 0.500L15.500 14.600L14.500 14.800z" fill="#b2c6c0" stroke="#9db2ac" stroke-width="0.25"/><path d="M7.500 15v-4" stroke="#3050c0" stroke-width="0.500"/><path d="M5 15.800l2.500-0.500" stroke="#d04030" stroke-width="0.600"/></svg>
<div class="t c " style="left:194.5px;top:508.29999999999995px;color:#161616">Slab2</div>
<svg style="left:226.0px;top:490px" width="17" height="16" viewBox="0 0 17 16"><path d="M0.500 5c2-3 9-5 16.500-5 1 3 0 6.500-1 8l-7.500 8c-4 0-8-6-8-11z" fill="#cfdfd9" stroke="#9db2ac" stroke-width="0.250"/><path d="M0.500 5c2-3 9-5 16.500-5 1 2 0.500 4.500-0.500 6-4-1-10-1.500-16-1z" fill="#e6f0ec"/><path d="M9 15.500c4-3 6-6 7-9.500l-4 1z" fill="#b2c6c0"/><path d="M7.500 15l-1-5.500" stroke="#3050c0" stroke-width="0.600"/></svg>
<div class="t c " style="left:234.5px;top:508.29999999999995px;color:#161616">Cylinder2</div>
<svg style="left:266.0px;top:490px" width="17" height="16" viewBox="0 0 17 16"><circle cx="9.200" cy="8.300" r="8" fill="#cfdfd9" stroke="#9db2ac" stroke-width="0.250"/><circle cx="9.200" cy="7.300" r="5.500" fill="#e6f0ec"/><circle cx="9.700" cy="4.500" r="2" fill="#a6b6de"/><path d="M3 10c2 3 9 3.500 12 0.500" fill="none" stroke="#b2c6c0" stroke-width="1"/><path d="M7.500 16.400h3" stroke="#e05030" stroke-width="0.800"/></svg>
<div class="t c " style="left:274.5px;top:508.29999999999995px;color:#161616">Sphere2</div>
<svg style="left:306.0px;top:490px" width="17" height="16" viewBox="0 0 17 16"><path d="M1.800 1.900c3-2 8-1 11 3s2.500 9-1.300 11.200l-3.500-1c2-2 2.500-5 0.500-8s-4.500-3-6.700-2.200z" fill="#cfdfd9" stroke="#9db2ac" stroke-width="0.250"/><path d="M2 2.500c3-1 7 0 9.500 3.500" fill="none" stroke="#f4f8f7" stroke-width="1.300"/><path d="M13.300 6.500c1.200 3 0.600 7-1.800 9" fill="none" stroke="#b2c6c0" stroke-width="1.200"/></svg>
<div class="t c " style="left:314.5px;top:508.29999999999995px;color:#161616">Partial Torus</div>
<svg style="left:346.0px;top:490px" width="17" height="16" viewBox="0 0 17 16"><ellipse cx="8.600" cy="8.300" rx="8.800" ry="5.400" transform="rotate(-32 8.600 8.300)" fill="#cfdfd9" stroke="#9db2ac" stroke-width="0.250"/><ellipse cx="7.800" cy="7.500" rx="6" ry="3" transform="rotate(-32 7.800 7.500)" fill="#e6f0ec"/><path d="M5 13.500c4 0 8.500-3.500 10.500-8" fill="none" stroke="#b2c6c0" stroke-width="1"/></svg>
<div class="t c " style="left:354.5px;top:508.29999999999995px;color:#161616">Ellipsoid</div>
<svg style="left:386.0px;top:490px" width="17" height="16" viewBox="0 0 17 16"><path d="M8.300 2.500L16.900 1.900L11.600 14.600L0.900 14.200z" fill="#1e2464" stroke="#1e2464" stroke-width="0.2"/><path d="M7.500 10.500c1-4 4.500-7 9-7.500-0.500 2.500-1.500 5.500-3 8-2 1.500-4.500 1.500-6-0.500z" fill="#e8eef6"/><path d="M9 10.500c1-3 3.500-5 6.500-5.500-0.500 2-1.300 4-2.500 5.500-1.300 1-3 1-4 0z" fill="#b6c4da"/></svg>
<div class="t c " style="left:394.5px;top:508.29999999999995px;color:#161616">Cut Ellipsoid</div>
<div class="a" style="left:16.5px;top:519px;width:28px;height:8.8px;background:#e0e0e0;border:0.5px solid #c2c2c2;box-sizing:border-box"></div>
<svg style="left:19px;top:520.5px" width="7" height="6" viewBox="0 0 7 6"><path d="M6.500 3h-5M3.500 0.800l-2.500 2.200 2.500 2.200" fill="none" stroke="#a8a8a8" stroke-width="1.200"/></svg>
<div class="t " style="left:28.5px;top:519.5px;color:#8c8c8c">Back</div>
<div class="a" style="left:47px;top:519px;width:63.5px;height:8.8px;background:#ececec;border:0.5px solid #c2c2c2;box-sizing:border-box"></div>
<div class="t c " style="left:78px;top:519.5px;color:#111;font-size:6.4px"><span style="display:inline-block;transform:scaleX(0.82)">More Catalogs</span></div>
<div class="a" style="left:111.7px;top:519px;width:901px;height:8.8px;background:#ececec;border:0.5px solid #c2c2c2;box-sizing:border-box"></div>
<div class="a" style="left:0px;top:529px;width:1024px;height:12px;background:#f0f0f0;"></div>
<div class="a" style="left:40px;top:529px;width:24px;height:11.5px;background:#fcfcfc;border:0.5px solid #c4c4c4;border-top:none;box-sizing:border-box"></div>
<div class="t " style="left:17px;top:530.9px;font-size:6.3px;letter-spacing:-0.07px;color:#484848">Starter</div>
<div class="t " style="left:42.2px;top:530.9px;font-size:6.3px;letter-spacing:-0.07px;color:#222">Shapes</div>
<div class="t " style="left:69px;top:530.9px;font-size:6.3px;letter-spacing:-0.07px;color:#484848">Advshaps</div>
<div class="t " style="left:102.8px;top:530.9px;font-size:6.3px;letter-spacing:-0.07px;color:#484848">FlexShapes</div>
<div class="t " style="left:140.6px;top:530.9px;font-size:6.3px;letter-spacing:-0.07px;color:#484848">Sheet Metal</div>
<div class="t " style="left:180.7px;top:530.9px;font-size:6.3px;letter-spacing:-0.07px;color:#484848">Tools</div>
<div class="t " style="left:202.5px;top:530.9px;font-size:6.3px;letter-spacing:-0.07px;color:#484848">Materials</div>
<div class="t " style="left:235px;top:530.9px;font-size:6.3px;letter-spacing:-0.07px;color:#484848">Animations</div>
<div class="t " style="left:274.5px;top:530.9px;font-size:6.3px;letter-spacing:-0.07px;color:#484848">Surfaces</div>
<div class="t " style="left:305.3px;top:530.9px;font-size:6.3px;letter-spacing:-0.07px;color:#484848">Textures</div>
<div class="t " style="left:335.5px;top:530.9px;font-size:6.3px;letter-spacing:-0.07px;color:#484848">Bumps</div>
<div class="t " style="left:362px;top:530.9px;font-size:6.3px;letter-spacing:-0.07px;color:#484848">Colors</div>
<div class="t " style="left:387px;top:530.9px;font-size:6.3px;letter-spacing:-0.07px;color:#484848">Steel Frames</div>
<div class="t " style="left:429.5px;top:530.9px;font-size:6.3px;letter-spacing:-0.07px;color:#484848">Tank</div>
<div class="t " style="left:449.5px;top:530.9px;font-size:6.3px;letter-spacing:-0.07px;color:#484848">ICM Add-on</div>
<div class="a" style="left:0px;top:541px;width:1024px;height:13px;background:#fafafa;"></div>
<div class="t " style="left:0.8px;top:543.7px;color:#333;font-size:6.3px;letter-spacing:-0.1px">For Help, press F1</div>
<div class="t " style="left:531.5px;top:544px;color:#444;font-size:6.3px;letter-spacing:-0.17px">View size: 1677 x&nbsp; 588</div>
<svg style="left:603.5px;top:543.5px" width="6" height="9" viewBox="0 0 6 9"><path d="M2 0.500h3.500v8h-3.500z" fill="#f2c830" stroke="#b8941c" stroke-width="0.400"/><path d="M2 2h1.500M2 3.500h2M2 5h1.500M2 6.500h2" stroke="#7a6210" stroke-width="0.400"/><path d="M0.300 1h1v1h-1z" fill="#e0a020"/></svg>
<div class="t " style="left:612.7px;top:544px;font-weight:bold;font-size:6.3px;letter-spacing:-0.4px;color:#333">Units:</div>
<div class="t " style="left:635.5px;top:544px;color:#444">mm, deg</div>
<svg style="left:668px;top:544px" width="9" height="9" viewBox="0 0 9 9"><circle cx="3.300" cy="3.300" r="2.600" fill="#f4f4f4" stroke="#777" stroke-width="0.700"/><path d="M5.200 5.200l2.800 2.800" stroke="#666" stroke-width="1.100"/></svg>
<svg style="left:681px;top:544px" width="9" height="9" viewBox="0 0 9 9"><circle cx="3.300" cy="3.300" r="2.600" fill="#f4f4f4" stroke="#777" stroke-width="0.700"/><path d="M5.200 5.200l2.800 2.800" stroke="#666" stroke-width="1.100"/></svg>
<div class="t" style="left:693.0px;top:543.500px;font-size:4px;color:#444">&#9662;</div>
<svg style="left:698.5px;top:543.5px" width="10" height="9" viewBox="0 0 10 9"><path d="M1 3l2-2h4.500v5l-2 2h-4.500z" fill="#f5d616" stroke="#7a6a10" stroke-width="0.500"/><path d="M7.500 3.500l2 1.500-2 1.500z" fill="#e08020"/></svg>
<div class="t" style="left:711.5px;top:543.500px;font-size:4px;color:#444">&#9662;</div>
<svg style="left:717px;top:543.5px" width="10" height="9" viewBox="0 0 10 9"><path d="M0.800 3l2.500-2.300h5.700v5.500l-2.500 2.500h-5.700z" fill="#3f86d8" stroke="#2a5aa0" stroke-width="0.400"/><path d="M0.800 3l2.500-2.300h5.700l-2.500 2.300z" fill="#9cc4f0"/><path d="M6.500 3l2.500-2.300v5.500l-2.500 2.500z" fill="#2a62b0"/></svg>
<div class="t" style="left:730.0px;top:543.500px;font-size:4px;color:#444">&#9662;</div>
<svg style="left:736px;top:544px" width="10" height="8" viewBox="0 0 10 8"><path d="M0.500 3h4" stroke="#333" stroke-width="0.600" stroke-dasharray="1 0.700"/><path d="M4 2h3v3h-3z" fill="#3f86d8"/><path d="M6 5.500h3v2.500h-3z" fill="#fff" stroke="#333" stroke-width="0.500"/></svg>
<div class="t" style="left:749.0px;top:543.500px;font-size:4px;color:#444">&#9662;</div>
<svg style="left:754px;top:543.5px" width="10" height="9" viewBox="0 0 10 9"><path d="M1 3.500l5.500-2.500 2.500 1-1.500 5.500-5.500 1.500z" fill="#3f86d8" stroke="#2a5aa0" stroke-width="0.400"/><path d="M2.500 3l5.500-2 1 0.500" fill="none" stroke="#9cc4f0" stroke-width="0.600"/></svg>
<svg style="left:768px;top:544.5px" width="10" height="8" viewBox="0 0 10 8"><circle cx="2.300" cy="5" r="1.800" fill="none" stroke="#7890b0" stroke-width="0.600"/><circle cx="7" cy="5" r="1.800" fill="none" stroke="#7890b0" stroke-width="0.600"/><path d="M2.300 3.200l1.500-2.700M7 3.200l1.500-2.700M4.100 5h1.100" fill="none" stroke="#7890b0" stroke-width="0.500"/></svg>
<div class="t" style="left:778.2px;top:543.500px;font-size:4px;color:#444">&#9662;</div>
<svg style="left:784.5px;top:543.5px" width="10" height="9" viewBox="0 0 10 9"><path d="M0.800 3l2.500-2.300h5.700v5.500l-2.500 2.500h-5.700z" fill="#3f86d8" stroke="#2a5aa0" stroke-width="0.400"/><path d="M0.800 3l2.500-2.300h5.700l-2.500 2.300z" fill="#9cc4f0"/><path d="M6.500 3l2.500-2.300v5.500l-2.500 2.500z" fill="#2a62b0"/></svg>
<div class="t" style="left:795.5px;top:543.500px;font-size:4px;color:#444">&#9662;</div>
<svg style="left:803px;top:544px" width="9" height="8" viewBox="0 0 9 8"><path d="M1 4l2.500-2.500v1.500c2.500 0 4.500 1 5 4-1.500-1.500-3-2-5-2v1.500z" fill="#c8c8c8"/><path d="M5 1.500l1.500-1 1.500 2" fill="none" stroke="#c0c0c0" stroke-width="0.600"/></svg>
<div class="a" style="left:813px;top:542.5px;width:13px;height:10.5px;background:#dadada;border:0.5px solid #c0c0c0;box-sizing:border-box"></div>
<svg style="left:816.5px;top:544px" width="7" height="8" viewBox="0 0 7 8"><path d="M1 0.500v6.300l1.700-1.500 1.200 2.500 1-0.500-1.200-2.400h2.300z" fill="#fff" stroke="#444" stroke-width="0.500"/></svg>
<svg style="left:830px;top:544.5px" width="6" height="8" viewBox="0 0 6 8"><path d="M1 0.500v5.500l1.500-1.300 1 2.200 0.800-0.400-1-2.100h2z" fill="#fbfbfb" stroke="#c8c8c8" stroke-width="0.500"/></svg>
<div class="a" style="left:839px;top:542.6px;width:74.5px;height:10px;background:#fff;border:0.5px solid #c4c4c4;box-sizing:border-box"></div>
<div class="t " style="left:840.3px;top:544px;color:#181818">Drilldown: Intellishape</div>
<div class="t" style="left:908.5px;top:543.500px;font-size:4px;color:#444">&#9662;</div>
<div class="a" style="left:914.3px;top:542.6px;width:95.5px;height:10px;background:#fff;border:0.5px solid #c4c4c4;box-sizing:border-box"></div>
<div class="t " style="left:916.3px;top:544px;color:#181818">Spindle</div>
<div class="t" style="left:1004.9px;top:543.500px;font-size:4px;color:#444">&#9662;</div>
<svg style="left:1011.5px;top:543.5px" width="9" height="9" viewBox="0 0 9 9"><path d="M3 0.500h3v2.500h-3z" fill="#e03030"/><path d="M0.500 5.500h3v2.500h-3zM5.500 5.500h3v2.500h-3z" fill="#3f78d0"/><path d="M4.500 3v1.300M2 5.500v-1.200h5v1.200" fill="none" stroke="#555" stroke-width="0.500"/></svg>
<div class="a" style="left:0px;top:554px;width:1024px;height:2px;background:#1c1c1c;"></div>
<div class="a" style="left:25px;top:554px;width:184px;height:2px;background:#e4e4e4;"></div>
<div class="a" style="left:287px;top:554px;width:18px;height:2px;background:#c83232;"></div>
</body></html>
